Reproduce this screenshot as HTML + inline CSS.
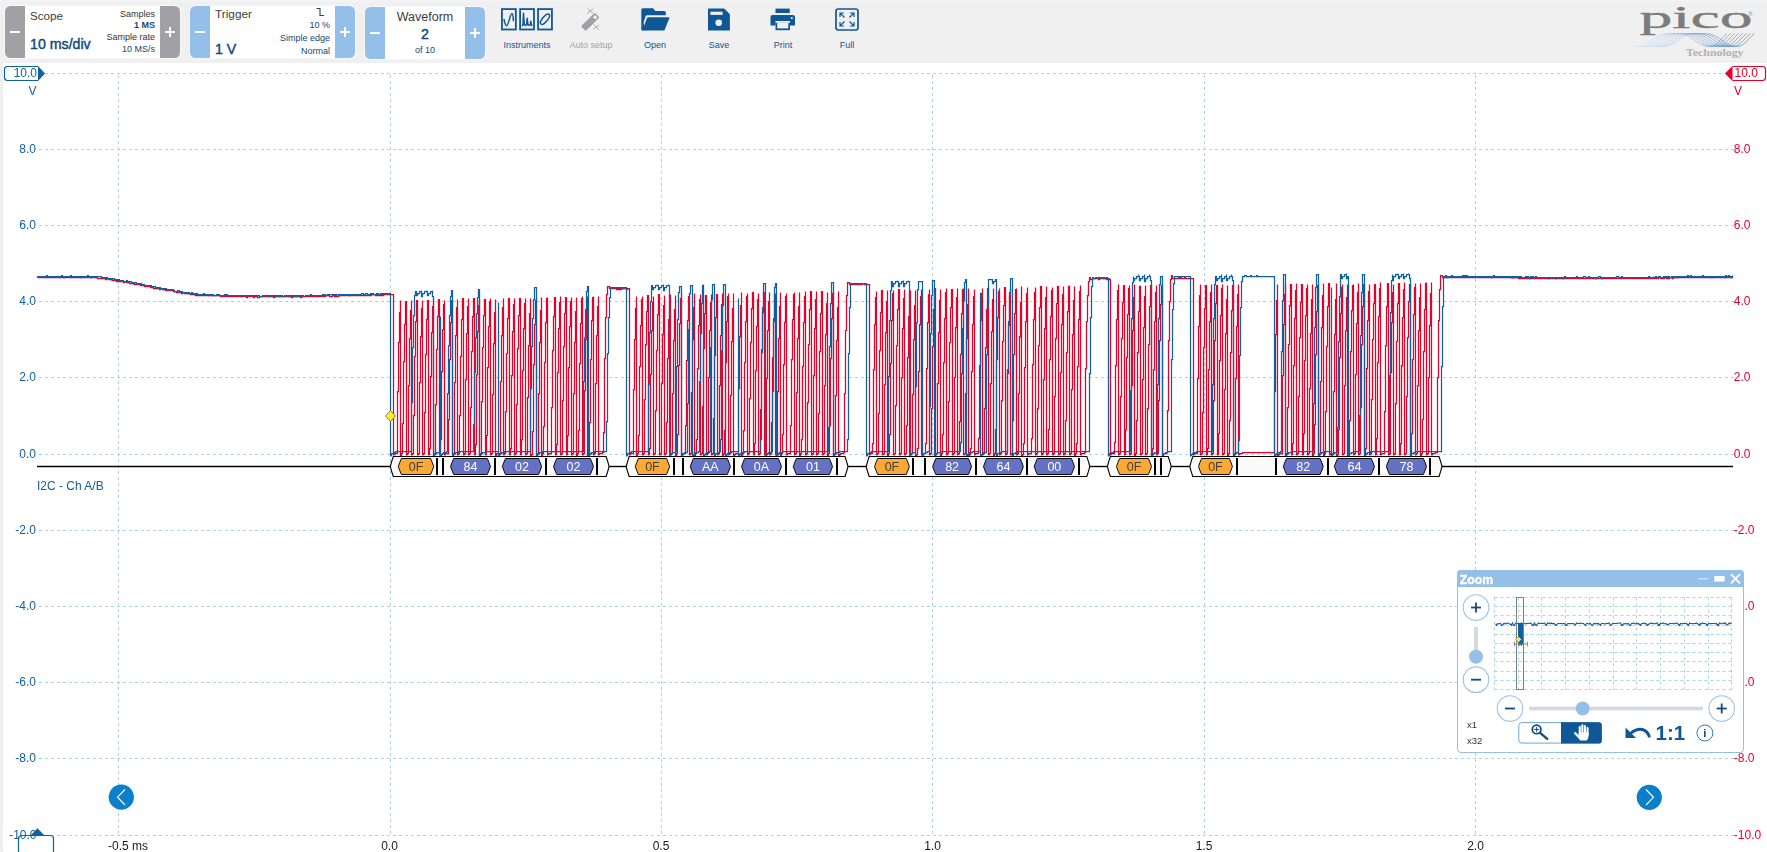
<!DOCTYPE html>
<html><head><meta charset="utf-8"><title>PicoScope</title>
<style>
html,body{margin:0;padding:0;}
body{width:1767px;height:852px;overflow:hidden;background:#f0f0f0;font-family:"Liberation Sans",sans-serif;position:relative;}
#plot{position:absolute;left:3px;top:63px;width:1764px;height:789px;background:#fff;}
#svg{position:absolute;left:0;top:0;will-change:transform;}
#svg text{font-family:"Liberation Sans",sans-serif;}
.abs{position:absolute;}
.ctl{position:absolute;height:52px;background:#fff;border-radius:5.5px;overflow:hidden;box-shadow:0 0 0 1px rgba(255,255,255,0.55);}
.ctl .b{position:absolute;top:0;width:20px;height:52px;}
.ctl .b i{position:absolute;background:#fff;}
.gray .b{background:#a1a1a5;}
.blue .b{background:#94bfe9;}
.t{position:absolute;white-space:nowrap;line-height:1;}
.r{text-align:right;}
.tb{position:absolute;top:0;width:64px;height:63px;text-align:center;font-size:9px;color:#0f5796;}
.tb span{position:absolute;left:0;width:64px;top:40.5px;line-height:1;}
</style></head>
<body>
<div class="abs" style="left:0;top:0;width:1767px;height:2px;background:#f2f3f5"></div>
<div id="plot"></div>
<div class="ctl gray" style="left:5px;top:6px;width:175px;">
  <div class="b" style="left:0"><i style="left:5px;top:25px;width:10px;height:2px"></i></div>
  <div class="b" style="right:0"><i style="left:5px;top:25px;width:10px;height:2px"></i><i style="left:9px;top:21px;width:2px;height:10px"></i></div>
  <div class="t" style="left:25px;top:4px;font-size:11.6px;color:#3c3c3c;">Scope</div>
  <div class="t" style="left:25px;top:31px;font-size:14.2px;color:#124a7c;-webkit-text-stroke:0.45px #124a7c;">10 ms/div</div>
  <div class="t r" style="right:25px;top:3.5px;font-size:9px;color:#333;">Samples</div>
  <div class="t r" style="right:25px;top:15px;font-size:9px;font-weight:bold;color:#124a7c;">1 MS</div>
  <div class="t r" style="right:25px;top:27px;font-size:9px;color:#333;">Sample rate</div>
  <div class="t r" style="right:25px;top:38.5px;font-size:9px;color:#124a7c;">10 MS/s</div>
</div>
<div class="ctl blue" style="left:190px;top:6px;width:165px;">
  <div class="b" style="left:0"><i style="left:5px;top:25px;width:10px;height:2px"></i></div>
  <div class="b" style="right:0"><i style="left:5px;top:25px;width:10px;height:2px"></i><i style="left:9px;top:21px;width:2px;height:10px"></i></div>
  <div class="t" style="left:25px;top:3px;font-size:11.8px;color:#3c3c3c;">Trigger</div>
  <div class="t" style="left:25px;top:35.5px;font-size:14.2px;color:#124a7c;-webkit-text-stroke:0.45px #124a7c;">1 V</div>
  <svg class="abs" style="right:28px;top:1px" width="12" height="11" viewBox="0 0 12 11"><path d="M1.5 1.5H5V8.5H9" fill="none" stroke="#124a7c" stroke-width="1.1"/></svg>
  <div class="t r" style="right:25px;top:15px;font-size:9px;color:#124a7c;">10 %</div>
  <div class="t r" style="right:25px;top:28px;font-size:9px;color:#124a7c;">Simple edge</div>
  <div class="t r" style="right:25px;top:41px;font-size:9px;color:#124a7c;">Normal</div>
</div>
<div class="ctl blue" style="left:365px;top:7px;width:120px;">
  <div class="b" style="left:0"><i style="left:5px;top:25px;width:10px;height:2px"></i></div>
  <div class="b" style="right:0"><i style="left:5px;top:25px;width:10px;height:2px"></i><i style="left:9px;top:21px;width:2px;height:10px"></i></div>
  <div class="t" style="left:20px;width:80px;text-align:center;top:4px;font-size:12.5px;color:#3c3c3c;">Waveform</div>
  <div class="t" style="left:20px;width:80px;text-align:center;top:19.5px;font-size:14.2px;color:#124a7c;-webkit-text-stroke:0.45px #124a7c;">2</div>
  <div class="t" style="left:20px;width:80px;text-align:center;top:38.5px;font-size:9px;color:#124a7c;">of 10</div>
</div>
<div class="tb" style="left:495px"><span>Instruments</span>
 <svg class="abs" style="left:6px;top:8px" width="53" height="24" viewBox="0 0 53 24">
  <g fill="none" stroke="#0f5796" stroke-width="1.8"><rect x="0.95" y="1.1" width="13.9" height="20.4"/><rect x="19.1" y="1.1" width="13.9" height="20.4"/><rect x="37.05" y="1.1" width="13.9" height="20.4"/></g>
  <g fill="none" stroke="#0f5796" stroke-width="1.5" stroke-linecap="round" stroke-linejoin="round"><path d="M3.1 11.6C3.8 15.4 4.6 17.7 5.6 17.7C7.6 17.7 9 5.6 11 5.6C12 5.6 12.2 10 12.4 12.6"/><path d="M21.4 17.6L22 16.4L22.5 5.2L23.3 16.9L24.5 17.4L25.6 16.5L26.2 10.2L26.9 16.8L28.3 17.3L29.3 16.5L29.8 13.2L30.3 16.5L30.8 17.6"/><ellipse cx="44" cy="11.2" rx="6.3" ry="2.5" transform="rotate(-50 44 11.2)"/></g>
 </svg></div>
<div class="tb" style="left:559px;color:#a3a3a3"><span>Auto setup</span>
 <svg class="abs" style="left:20px;top:7px" width="24" height="26" viewBox="0 0 24 26">
  <path d="M15.1 6.6Q15.8 5.9 16.5 6.6L19.8 9.7Q20.5 10.4 19.8 11.1L7.5 23.2Q6.7 23.9 5.9 23.2L2.7 20Q2 19.2 2.7 18.5Z" fill="#a0a1a4"/>
  <path d="M16.1 8L18.4 10.2L16.2 12.4L13.9 10.2Z" fill="#f0f0f0"/>
  <g stroke="#a0a1a4" stroke-width="0.8" fill="none" stroke-linecap="round"><path d="M8.8 1.8L14 6.5M14 1.9L8.4 6.5"/><path d="M15 17.5L19.7 22.8M20 18.4L14.5 21.8"/></g>
 </svg></div>
<div class="tb" style="left:623px"><span>Open</span>
 <svg class="abs" style="left:18px;top:8px" width="29" height="23" viewBox="0 0 29 23">
  <path d="M0.3 21.6V1.7Q0.3 0.2 1.8 0.2H12.1L14.3 2.9H23.3Q24.8 2.9 24.8 4.4V7.2H6.3Q5 7.2 4.5 8.4L0.3 21.6Z" fill="#0f5796"/>
  <path d="M0.3 20V21.3Q0.3 22.6 1.6 22.6H3L3 14Z" fill="#0f5796"/>
  <path d="M2 22.6Q1.2 22.6 1.5 21.8L6 10.2Q6.4 9.3 7.4 9.3H27.7Q28.6 9.3 28.3 10.2L23.4 22.6Z" fill="#0f5796"/>
 </svg></div>
<div class="tb" style="left:687px"><span>Save</span>
 <svg class="abs" style="left:20px;top:8px" width="24" height="23" viewBox="0 0 24 23">
  <path d="M1 1Q1 0.5 1.5 0.5H17.2L22.9 6.2V22Q22.9 22.5 22.4 22.5H1.5Q1 22.5 1 22Z" fill="#0f5796"/>
  <rect x="3.4" y="3.7" width="12.2" height="3.2" fill="#f0f0f0"/>
  <circle cx="11.7" cy="14.7" r="3.3" fill="#f0f0f0"/>
 </svg></div>
<div class="tb" style="left:751px"><span>Print</span>
 <svg class="abs" style="left:19px;top:8px" width="26" height="23" viewBox="0 0 26 23">
  <rect x="5.5" y="0.6" width="14.3" height="4.4" fill="#0f5796"/>
  <path d="M0.5 9Q0.5 7 2.5 7H23Q25 7 25 9V17.5H20V13H5.5V17.5H0.5Z" fill="#0f5796"/>
  <rect x="5.5" y="14.8" width="14.5" height="7.4" fill="#0f5796"/>
  <rect x="7.2" y="14.8" width="11.1" height="5.6" fill="#f0f0f0"/>
  <circle cx="21.8" cy="10" r="1.1" fill="#f0f0f0"/>
 </svg></div>
<div class="tb" style="left:815px"><span>Full</span>
 <svg class="abs" style="left:20px;top:8px" width="24" height="23" viewBox="0 0 24 23">
  <rect x="1" y="1" width="22" height="21" rx="2.2" fill="none" stroke="#0f5796" stroke-width="1.7"/>
  <g fill="none" stroke="#0f5796" stroke-width="1.2"><path d="M5 9V5H9M5 5L9.5 9.5"/><path d="M15 5H19V9M19 5L14.5 9.5"/><path d="M5 14V18H9M5 18L9.5 13.5"/><path d="M19 14V18H15M19 18L14.5 13.5"/></g>
 </svg></div>
<svg class="abs" style="left:1630px;top:0" width="137" height="63" viewBox="0 0 137 63">
  <defs><linearGradient id="lg" gradientUnits="userSpaceOnUse" x1="4" x2="124" y1="0" y2="0"><stop offset="0" stop-color="#d4e5f6"/><stop offset="0.4" stop-color="#9cc0e6"/><stop offset="0.7" stop-color="#4f86be"/><stop offset="1" stop-color="#2a6098"/></linearGradient></defs>
  <g fill="none" stroke="url(#lg)" stroke-width="0.55" id="pl"><path d="M4.5 46.8C19.5 46.8 23.5 33.6 37.5 33.6H48.5C62.5 33.6 66.5 46.6 79.5 46.6C86.5 46.6 90.5 39 97.0 33.4"/><path d="M8.4 46.8C23.4 46.8 27.4 33.6 41.4 33.6H52.4C66.4 33.6 70.4 46.6 83.4 46.6C90.4 46.6 94.4 39 100.9 33.4"/><path d="M12.3 46.8C27.3 46.8 31.3 33.6 45.3 33.6H56.3C70.3 33.6 74.3 46.6 87.3 46.6C94.3 46.6 98.3 39 104.8 33.4"/><path d="M16.2 46.8C31.2 46.8 35.2 33.6 49.2 33.6H60.2C74.2 33.6 78.2 46.6 91.2 46.6C98.2 46.6 102.2 39 108.7 33.4"/><path d="M20.1 46.8C35.1 46.8 39.1 33.6 53.1 33.6H64.1C78.1 33.6 82.1 46.6 95.1 46.6C102.1 46.6 106.1 39 112.6 33.4"/><path d="M24.0 46.8C39.0 46.8 43.0 33.6 57.0 33.6H68.0C82.0 33.6 86.0 46.6 99.0 46.6C106.0 46.6 110.0 39 116.5 33.4"/><path d="M27.9 46.8C42.9 46.8 46.9 33.6 60.9 33.6H71.9C85.9 33.6 89.9 46.6 102.9 46.6C109.9 46.6 113.9 39 120.4 33.4"/><path d="M31.8 46.8C46.8 46.8 50.8 33.6 64.8 33.6H75.8C89.8 33.6 93.8 46.6 106.8 46.6C113.8 46.6 117.8 39 124.3 33.4"/></g>
  <text transform="translate(9.5 28.3) scale(2.12 1)" font-size="31" fill="#7c7c7c" stroke="#7c7c7c" stroke-width="0.35" style="font-family:'Liberation Serif',serif">pico</text>
  <text x="118.5" y="15.5" font-size="5.5" fill="#8a8a8a" style="font-family:'Liberation Sans',sans-serif">®</text>
  <text x="56" y="56.3" font-size="11" font-weight="bold" fill="#b2b2b2" textLength="57.5" lengthAdjust="spacingAndGlyphs" style="font-family:'Liberation Serif',serif">Technology</text>
</svg>

<svg id="svg" width="1767" height="852" viewBox="0 0 1767 852">
<line x1="39" y1="73.5" x2="1734" y2="73.5" stroke="#a6d5e6" stroke-width="1" stroke-dasharray="3 3"/>
<line x1="39" y1="149.5" x2="1734" y2="149.5" stroke="#a6d5e6" stroke-width="1" stroke-dasharray="3 3"/>
<line x1="39" y1="225.5" x2="1734" y2="225.5" stroke="#a6d5e6" stroke-width="1" stroke-dasharray="3 3"/>
<line x1="39" y1="301.5" x2="1734" y2="301.5" stroke="#a6d5e6" stroke-width="1" stroke-dasharray="3 3"/>
<line x1="39" y1="377.5" x2="1734" y2="377.5" stroke="#a6d5e6" stroke-width="1" stroke-dasharray="3 3"/>
<line x1="39" y1="454.5" x2="1734" y2="454.5" stroke="#a6d5e6" stroke-width="1" stroke-dasharray="3 3"/>
<line x1="39" y1="530.5" x2="1734" y2="530.5" stroke="#a6d5e6" stroke-width="1" stroke-dasharray="3 3"/>
<line x1="39" y1="606.5" x2="1734" y2="606.5" stroke="#a6d5e6" stroke-width="1" stroke-dasharray="3 3"/>
<line x1="39" y1="682.5" x2="1734" y2="682.5" stroke="#a6d5e6" stroke-width="1" stroke-dasharray="3 3"/>
<line x1="39" y1="758.5" x2="1734" y2="758.5" stroke="#a6d5e6" stroke-width="1" stroke-dasharray="3 3"/>
<line x1="39" y1="835.5" x2="1734" y2="835.5" stroke="#a6d5e6" stroke-width="1" stroke-dasharray="3 3"/>
<line x1="118.5" y1="75" x2="118.5" y2="835" stroke="#a6d5e6" stroke-width="1" stroke-dasharray="3 3"/>
<line x1="390.5" y1="75" x2="390.5" y2="835" stroke="#a6d5e6" stroke-width="1" stroke-dasharray="3 3"/>
<line x1="661.5" y1="75" x2="661.5" y2="835" stroke="#a6d5e6" stroke-width="1" stroke-dasharray="3 3"/>
<line x1="932.5" y1="75" x2="932.5" y2="835" stroke="#a6d5e6" stroke-width="1" stroke-dasharray="3 3"/>
<line x1="1204.5" y1="75" x2="1204.5" y2="835" stroke="#a6d5e6" stroke-width="1" stroke-dasharray="3 3"/>
<line x1="1475.5" y1="75" x2="1475.5" y2="835" stroke="#a6d5e6" stroke-width="1" stroke-dasharray="3 3"/>
<text x="36" y="153.3" text-anchor="end" font-size="12" fill="#11609f">8.0</text>
<text x="1733.8" y="153.3" text-anchor="start" font-size="12" fill="#e60028">8.0</text>
<text x="36" y="229.3" text-anchor="end" font-size="12" fill="#11609f">6.0</text>
<text x="1733.8" y="229.3" text-anchor="start" font-size="12" fill="#e60028">6.0</text>
<text x="36" y="305.3" text-anchor="end" font-size="12" fill="#11609f">4.0</text>
<text x="1733.8" y="305.3" text-anchor="start" font-size="12" fill="#e60028">4.0</text>
<text x="36" y="381.3" text-anchor="end" font-size="12" fill="#11609f">2.0</text>
<text x="1733.8" y="381.3" text-anchor="start" font-size="12" fill="#e60028">2.0</text>
<text x="36" y="458.3" text-anchor="end" font-size="12" fill="#11609f">0.0</text>
<text x="1733.8" y="458.3" text-anchor="start" font-size="12" fill="#e60028">0.0</text>
<text x="36" y="534.3" text-anchor="end" font-size="12" fill="#11609f">-2.0</text>
<text x="1733.8" y="534.3" text-anchor="start" font-size="12" fill="#e60028">-2.0</text>
<text x="36" y="610.3" text-anchor="end" font-size="12" fill="#11609f">-4.0</text>
<text x="1733.8" y="610.3" text-anchor="start" font-size="12" fill="#e60028">-4.0</text>
<text x="36" y="686.3" text-anchor="end" font-size="12" fill="#11609f">-6.0</text>
<text x="1733.8" y="686.3" text-anchor="start" font-size="12" fill="#e60028">-6.0</text>
<text x="36" y="762.3" text-anchor="end" font-size="12" fill="#11609f">-8.0</text>
<text x="1733.8" y="762.3" text-anchor="start" font-size="12" fill="#e60028">-8.0</text>
<text x="1733.8" y="839" text-anchor="start" font-size="12" fill="#e60028">-10.0</text>
<text x="32.5" y="95" text-anchor="middle" font-size="12" fill="#11609f">V</text>
<text x="1738" y="95" text-anchor="middle" font-size="12" fill="#e60028">V</text>
<path d="M38 66.5H7.5Q4.5 66.5 4.5 69.5V77.5Q4.5 80.5 7.5 80.5H38" fill="#fff" stroke="#11609f" stroke-width="1.2"/>
<path d="M38 66L45 73.5L38 81Z" fill="#11609f"/>
<text x="37" y="77.4" text-anchor="end" font-size="12" fill="#11609f">10.0</text>
<path d="M1732.5 66.5H1762.5Q1765.5 66.5 1765.5 69.5V77.5Q1765.5 80.5 1762.5 80.5H1732.5" fill="#fff" stroke="#e60028" stroke-width="1.2"/>
<path d="M1732.5 66L1725 73.5L1732.5 81Z" fill="#e60028"/>
<text x="1734.5" y="77.4" text-anchor="start" font-size="12" fill="#e60028">10.0</text>
<text x="128" y="849.6" text-anchor="middle" font-size="12" fill="#1a1a1a">-0.5 ms</text>
<text x="389.5" y="849.6" text-anchor="middle" font-size="12" fill="#1a1a1a">0.0</text>
<text x="661" y="849.6" text-anchor="middle" font-size="12" fill="#1a1a1a">0.5</text>
<text x="932.5" y="849.6" text-anchor="middle" font-size="12" fill="#1a1a1a">1.0</text>
<text x="1204" y="849.6" text-anchor="middle" font-size="12" fill="#1a1a1a">1.5</text>
<text x="1475.5" y="849.6" text-anchor="middle" font-size="12" fill="#1a1a1a">2.0</text>
<path d="M18.5 853V838.5Q18.5 835.5 21.5 835.5H50.5Q53.5 835.5 53.5 838.5V853" fill="#fff" stroke="#11609f" stroke-width="1.2"/>
<text x="36.5" y="839" text-anchor="end" font-size="12" fill="#11609f">-10.0</text>
<path d="M30.5 835.5L37.5 828.3L44.5 835.5Z" fill="#11609f"/>
<path d="M37.5 277.5H38.5H39.5H40.5H41.5H42.5H43.5H44.5H45.5H46.5H47.5H48.5H49.5H50.5H51.5H52.5H53.5H54.5H55.5H56.5H57.5H58.5H59.5H60.5H61.5H62.5H63.5H64.5H65.5H66.5H67.5H68.5H69.5H70.5H71.5H72.5H73.5H74.5H75.5H76.5H77.5H78.5H79.5H80.5H81.5H82.5H83.5H84.5H85.5H86.5H87.5H88.5H89.5H90.5H91.5H92.5H93.5H94.5H95.5H96.5H97.5V278.5V277.5V278.5H98.5H99.5H100.5H101.5V277.5V278.5V277.5H102.5V278.5V277.5V278.5H103.5H104.5H105.5V279.5V278.5V279.5H106.5V278.5V279.5V278.5H107.5H108.5V279.5V278.5V279.5H109.5H110.5H111.5V280.5V279.5H112.5V280.5V279.5V280.5H113.5H114.5H115.5H116.5V281.5V280.5V281.5H117.5V280.5V281.5V280.5H118.5V281.5V280.5V281.5H119.5H120.5H121.5H122.5H123.5V282.5V281.5V282.5H124.5V281.5V282.5V281.5H125.5V282.5V281.5H126.5V282.5V281.5V282.5H127.5H128.5H129.5V283.5V282.5V283.5H130.5H131.5H132.5H133.5V284.5V283.5H134.5V284.5V283.5V284.5H135.5H136.5H137.5H138.5H139.5H140.5V285.5V284.5V285.5H141.5H142.5H143.5H144.5V286.5V285.5V286.5H145.5H146.5H147.5H148.5H149.5H150.5V287.5V286.5V287.5H151.5H152.5H153.5V288.5V287.5V288.5H154.5H155.5H156.5H157.5H158.5H159.5V289.5V288.5V289.5H160.5V288.5V289.5V288.5H161.5V289.5V288.5H162.5V289.5V288.5V289.5H163.5H164.5H165.5V290.5V289.5V290.5H166.5V289.5V290.5V289.5H167.5V290.5V289.5V290.5H168.5H169.5H170.5H171.5H172.5H173.5V291.5V290.5V291.5H174.5H175.5H176.5V292.5V291.5V292.5H177.5H178.5H179.5H180.5H181.5V293.5V292.5V293.5H182.5V292.5V293.5V292.5H183.5V293.5V292.5H184.5V293.5V292.5V293.5H185.5H186.5H187.5V294.5V293.5H188.5H189.5V294.5V293.5H190.5V294.5V293.5V294.5H191.5H192.5H193.5H194.5H195.5V295.5V294.5V295.5H196.5V294.5V295.5V294.5H197.5V295.5V294.5V295.5H198.5H199.5H200.5H201.5H202.5H203.5H204.5H205.5H206.5H207.5H208.5V296.5V295.5H209.5H210.5H211.5H212.5H213.5H214.5H215.5H216.5H217.5H218.5H219.5H220.5V296.5V295.5V296.5H221.5H222.5H223.5H224.5H225.5H226.5H227.5H228.5H229.5H230.5H231.5H232.5H233.5H234.5H235.5H236.5H237.5H238.5H239.5H240.5H241.5H242.5H243.5H244.5H245.5H246.5V297.5V296.5V297.5H247.5V296.5V297.5V296.5H248.5H249.5H250.5H251.5H252.5H253.5V297.5V296.5V297.5H254.5V296.5V297.5V296.5H255.5H256.5H257.5V297.5V296.5V297.5H258.5H259.5V296.5V297.5V296.5H260.5H261.5H262.5H263.5H264.5H265.5H266.5H267.5H268.5H269.5H270.5H271.5H272.5H273.5V297.5V296.5V297.5H274.5V296.5V297.5V296.5H275.5H276.5H277.5H278.5H279.5H280.5H281.5H282.5H283.5H284.5H285.5H286.5H287.5H288.5H289.5H290.5H291.5V297.5V296.5V297.5H292.5V296.5V297.5V296.5H293.5H294.5H295.5H296.5H297.5H298.5H299.5H300.5V297.5V296.5V297.5H301.5V296.5V297.5V296.5H302.5H303.5H304.5H305.5H306.5H307.5H308.5H309.5H310.5H311.5H312.5H313.5H314.5H315.5H316.5H317.5H318.5H319.5V295.5V296.5H320.5V295.5V296.5V295.5H321.5V296.5V295.5V296.5H322.5H323.5H324.5H325.5V295.5V296.5V295.5H326.5H327.5H328.5H329.5V296.5V295.5V296.5H330.5H331.5H332.5V295.5V296.5V295.5H333.5H334.5V296.5V295.5V296.5H335.5V295.5V296.5V295.5H336.5V296.5V295.5V296.5H337.5H338.5V295.5V296.5V295.5H339.5H340.5H341.5H342.5H343.5H344.5H345.5H346.5H347.5H348.5H349.5H350.5H351.5H352.5H353.5H354.5H355.5H356.5H357.5H358.5H359.5H360.5H361.5H362.5H363.5V294.5V295.5V294.5H364.5V295.5V294.5V295.5H365.5H366.5H367.5H368.5H369.5H370.5H371.5V294.5V295.5V294.5H372.5H373.5H374.5H375.5V295.5V294.5V295.5H376.5V294.5V295.5V294.5H377.5V295.5V294.5V295.5H378.5H379.5V294.5V295.5V294.5H380.5V295.5V294.5V295.5H381.5V294.5V295.5V294.5H382.5V295.5V294.5V295.5H383.5V294.5V295.5V294.5H384.5H385.5H386.5H387.5H388.5H389.5H390.5H391.5H392.5H393.5V455.5V294.5V454.5H394.5V453.5V454.5V453.5H395.5H396.5H397.5V391.5V453.5V391.5H398.5V342.5V391.5V342.5H399.5V312.5V342.5V312.5H400.5V455.5V300.5V455.5H401.5V453.5V455.5V453.5H402.5V423.5V453.5V423.5H403.5V361.5V423.5V361.5H404.5V324.5V361.5V324.5H405.5V301.5V324.5V301.5H406.5V455.5V301.5V454.5H407.5V453.5V454.5V453.5H408.5V385.5V453.5V385.5H409.5V338.5V385.5V338.5H410.5V310.5V338.5V310.5H411.5V455.5V300.5V454.5H412.5V453.5V454.5V453.5H413.5V415.5V453.5V415.5H414.5V356.5V415.5V356.5H415.5V321.5V356.5V321.5H416.5V300.5V321.5V300.5H417.5V455.5V300.5V454.5H418.5V453.5V454.5V453.5H419.5V382.5V453.5V382.5H420.5V336.5V382.5V336.5H421.5V308.5V336.5V308.5H422.5V455.5V300.5V454.5H423.5V453.5V454.5V453.5H424.5V412.5V453.5V412.5H425.5V354.5V412.5V354.5H426.5V319.5V354.5V319.5H427.5V300.5V319.5V300.5H428.5V455.5V300.5V454.5H429.5V448.5V454.5V448.5H430.5V376.5V448.5V376.5H431.5V332.5V376.5V332.5H432.5V306.5V332.5V306.5H433.5V455.5V299.5V454.5H434.5V453.5V454.5V453.5H435.5V404.5V453.5V404.5H436.5V349.5V404.5V349.5H437.5V316.5V349.5V316.5H438.5V299.5V316.5V299.5H439.5V455.5V299.5V454.5H440.5V439.5V454.5V439.5H441.5V371.5V439.5V371.5H442.5V329.5V371.5V329.5H443.5V304.5V329.5V304.5H444.5V455.5V300.5V454.5H445.5V453.5V454.5V453.5H446.5H447.5H448.5V419.5V453.5V419.5H449.5V359.5V419.5V359.5H450.5V322.5V359.5V322.5H451.5V300.5V322.5V300.5H452.5V455.5V300.5V454.5H453.5V453.5V454.5V453.5H454.5V382.5V453.5V382.5H455.5V335.5V382.5V335.5H456.5V307.5V335.5V307.5H457.5V455.5V299.5V454.5H458.5V453.5V454.5V453.5H459.5V415.5V453.5V415.5H460.5V356.5V415.5V356.5H461.5V319.5V356.5V319.5H462.5V298.5V319.5V298.5H463.5V455.5V298.5V454.5H464.5V453.5V454.5V453.5H465.5V379.5V453.5V379.5H466.5V333.5V379.5V333.5H467.5V306.5V333.5V306.5H468.5V455.5V298.5V454.5H469.5V453.5V454.5V453.5H470.5V407.5V453.5V407.5H471.5V351.5V407.5V351.5H472.5V316.5V351.5V316.5H473.5V298.5V316.5V298.5H474.5V455.5V298.5V454.5H475.5V444.5V454.5V444.5H476.5V374.5V444.5V374.5H477.5V331.5V374.5V331.5H478.5V305.5V331.5V305.5H479.5V455.5V299.5V454.5H480.5V453.5V454.5V453.5H481.5V401.5V453.5V401.5H482.5V347.5V401.5V347.5H483.5V315.5V347.5V315.5H484.5V299.5V315.5V299.5H485.5V455.5V299.5V454.5H486.5V435.5V454.5V435.5H487.5V367.5V435.5V367.5H488.5V326.5V367.5V326.5H489.5V301.5V326.5V301.5H490.5V455.5V298.5V454.5H491.5V453.5V454.5V453.5H492.5V394.5V453.5V394.5H493.5V343.5V394.5V343.5H494.5V312.5V343.5V312.5H495.5V455.5V299.5V455.5H496.5V453.5V455.5V453.5H497.5H498.5H499.5H500.5V381.5V453.5V381.5H501.5V335.5V381.5V335.5H502.5V307.5V335.5V307.5H503.5V455.5V298.5V454.5H504.5V453.5V454.5V453.5H505.5V411.5V453.5V411.5H506.5V353.5V411.5V353.5H507.5V318.5V353.5V318.5H508.5V298.5V318.5V298.5H509.5V455.5V298.5V454.5H510.5V448.5V454.5V448.5H511.5V375.5V448.5V375.5H512.5V331.5V375.5V331.5H513.5V304.5V331.5V304.5H514.5V455.5V298.5V454.5H515.5V453.5V454.5V453.5H516.5V404.5V453.5V404.5H517.5V348.5V404.5V348.5H518.5V315.5V348.5V315.5H519.5V298.5V315.5V298.5H520.5V455.5V298.5V454.5H521.5V439.5V454.5V439.5H522.5V370.5V439.5V370.5H523.5V328.5V370.5V328.5H524.5V303.5V328.5V303.5H525.5V455.5V298.5V454.5H526.5V453.5V454.5V453.5H527.5V397.5V453.5V397.5H528.5V345.5V397.5V345.5H529.5V313.5V345.5V313.5H530.5V455.5V298.5V455.5H531.5V454.5V455.5V454.5H532.5V431.5V454.5V431.5H533.5V364.5V431.5V364.5H534.5V324.5V364.5V324.5H535.5V300.5V324.5V300.5H536.5V455.5V297.5V454.5H537.5V453.5V454.5V453.5H538.5V393.5V453.5V393.5H539.5V342.5V393.5V342.5H540.5V310.5V342.5V310.5H541.5V455.5V297.5V455.5H542.5V453.5V455.5V453.5H543.5V426.5V453.5V426.5H544.5V362.5V426.5V362.5H545.5V322.5V362.5V322.5H546.5V298.5V322.5V298.5H547.5V455.5V297.5V454.5H548.5V453.5V454.5V453.5H549.5H550.5H551.5V407.5V453.5V407.5H552.5V350.5V407.5V350.5H553.5V316.5V350.5V316.5H554.5V297.5V316.5V297.5H555.5V455.5V297.5V454.5H556.5V444.5V454.5V444.5H557.5V372.5V444.5V372.5H558.5V328.5V372.5V328.5H559.5V302.5V328.5V302.5H560.5V455.5V296.5V454.5H561.5V453.5V454.5V453.5H562.5V400.5V453.5V400.5H563.5V346.5V400.5V346.5H564.5V313.5V346.5V313.5H565.5V297.5V313.5V297.5H566.5V455.5V297.5V454.5H567.5V435.5V454.5V435.5H568.5V367.5V435.5V367.5H569.5V326.5V367.5V326.5H570.5V301.5V326.5V301.5H571.5V455.5V297.5V454.5H572.5V453.5V454.5V453.5H573.5V393.5V453.5V393.5H574.5V342.5V393.5V342.5H575.5V311.5V342.5V311.5H576.5V455.5V297.5V455.5H577.5V453.5V455.5V453.5H578.5V430.5V453.5V430.5H579.5V363.5V430.5V363.5H580.5V323.5V363.5V323.5H581.5V298.5V323.5V298.5H582.5V455.5V296.5V454.5H583.5V453.5V454.5V453.5H584.5V390.5V453.5V390.5H585.5V339.5V390.5V339.5H586.5V308.5V339.5V308.5H587.5V455.5V296.5V455.5H588.5V453.5V455.5V453.5H589.5V422.5V453.5V422.5H590.5V359.5V422.5V359.5H591.5V320.5V359.5V320.5H592.5V297.5V320.5V297.5H593.5V455.5V296.5V454.5H594.5V453.5V454.5V453.5H595.5V383.5V453.5V383.5H596.5V335.5V383.5V335.5H597.5V306.5V335.5V306.5H598.5V455.5V296.5V454.5H599.5V453.5V454.5V453.5H600.5H601.5H602.5V452.5V453.5V452.5H603.5V432.5V452.5V432.5H604.5V358.5V432.5V358.5H605.5V317.5V358.5V317.5H606.5V294.5V317.5V294.5H607.5V286.5V294.5V286.5H608.5H609.5V288.5V286.5V288.5H610.5H611.5H612.5H613.5H614.5H615.5H616.5V289.5V288.5V289.5H617.5V288.5V289.5V288.5H618.5V289.5V288.5V289.5H619.5V288.5V289.5V288.5H620.5V289.5V288.5V289.5H621.5V288.5V289.5V288.5H622.5H623.5H624.5H625.5H626.5V289.5V288.5V289.5H627.5V288.5V289.5V288.5H628.5H629.5V455.5V288.5V454.5H630.5V453.5V454.5V453.5H631.5H632.5H633.5V389.5V453.5V389.5H634.5V339.5V389.5V339.5H635.5V308.5V339.5V308.5H636.5V455.5V296.5V455.5H637.5V453.5V455.5V453.5H638.5V435.5V453.5V435.5H639.5V366.5V435.5V366.5H640.5V325.5V366.5V325.5H641.5V299.5V325.5V299.5H642.5V455.5V296.5V454.5H643.5V453.5V454.5V453.5H644.5V399.5V453.5V399.5H645.5V344.5V399.5V344.5H646.5V311.5V344.5V311.5H647.5V295.5V311.5V295.5H648.5V455.5V295.5V454.5H649.5V448.5V454.5V448.5H650.5V374.5V448.5V374.5H651.5V330.5V374.5V330.5H652.5V302.5V330.5V302.5H653.5V455.5V296.5V454.5H654.5V453.5V454.5V453.5H655.5V410.5V453.5V410.5H656.5V350.5V410.5V350.5H657.5V314.5V350.5V314.5H658.5V294.5V314.5V294.5H659.5V455.5V294.5V454.5H660.5V453.5V454.5V453.5H661.5V383.5V453.5V383.5H662.5V334.5V383.5V334.5H663.5V305.5V334.5V305.5H664.5V455.5V295.5V454.5H665.5V453.5V454.5V453.5H666.5V422.5V453.5V422.5H667.5V358.5V422.5V358.5H668.5V319.5V358.5V319.5H669.5V295.5V319.5V295.5H670.5V455.5V294.5V454.5H671.5V453.5V454.5V453.5H672.5V393.5V453.5V393.5H673.5V340.5V393.5V340.5H674.5V309.5V340.5V309.5H675.5V455.5V295.5V455.5H676.5V453.5V455.5V453.5H677.5V434.5V453.5V434.5H678.5V365.5V434.5V365.5H679.5V323.5V365.5V323.5H680.5V298.5V323.5V298.5H681.5V455.5V294.5V454.5H682.5V453.5V454.5V453.5H683.5H684.5H685.5V425.5V453.5V425.5H686.5V360.5V425.5V360.5H687.5V320.5V360.5V320.5H688.5V296.5V320.5V296.5H689.5V455.5V294.5V454.5H690.5V453.5V454.5V453.5H691.5V392.5V453.5V392.5H692.5V339.5V392.5V339.5H693.5V307.5V339.5V307.5H694.5V455.5V293.5V455.5H695.5V453.5V455.5V453.5H696.5V439.5V453.5V439.5H697.5V368.5V439.5V368.5H698.5V325.5V368.5V325.5H699.5V299.5V325.5V299.5H700.5V455.5V294.5V454.5H701.5V453.5V454.5V453.5H702.5V406.5V453.5V406.5H703.5V348.5V406.5V348.5H704.5V313.5V348.5V313.5H705.5V295.5V313.5V295.5H706.5V455.5V295.5V454.5H707.5V453.5V454.5V453.5H708.5V377.5V453.5V377.5H709.5V330.5V377.5V330.5H710.5V302.5V330.5V302.5H711.5V455.5V294.5V454.5H712.5V453.5V454.5V453.5H713.5V418.5V453.5V418.5H714.5V355.5V418.5V355.5H715.5V317.5V355.5V317.5H716.5V294.5V317.5V294.5H717.5V455.5V294.5V454.5H718.5V453.5V454.5V453.5H719.5V385.5V453.5V385.5H720.5V335.5V385.5V335.5H721.5V304.5V335.5V304.5H722.5V455.5V293.5V455.5H723.5V453.5V455.5V453.5H724.5V430.5V453.5V430.5H725.5V362.5V430.5V362.5H726.5V321.5V362.5V321.5H727.5V296.5V321.5V296.5H728.5V455.5V293.5V454.5H729.5V453.5V454.5V453.5H730.5V395.5V453.5V395.5H731.5V341.5V395.5V341.5H732.5V308.5V341.5V308.5H733.5V455.5V293.5V455.5H734.5V454.5V455.5V454.5H735.5V453.5V454.5V453.5H736.5H737.5H738.5V388.5V453.5V388.5H739.5V336.5V388.5V336.5H740.5V305.5V336.5V305.5H741.5V455.5V292.5V455.5H742.5V453.5V455.5V453.5H743.5V430.5V453.5V430.5H744.5V362.5V430.5V362.5H745.5V321.5V362.5V321.5H746.5V296.5V321.5V296.5H747.5V455.5V293.5V454.5H748.5V453.5V454.5V453.5H749.5V398.5V453.5V398.5H750.5V342.5V398.5V342.5H751.5V308.5V342.5V308.5H752.5V292.5V308.5V292.5H753.5V455.5V292.5V454.5H754.5V443.5V454.5V443.5H755.5V370.5V443.5V370.5H756.5V326.5V370.5V326.5H757.5V299.5V326.5V299.5H758.5V455.5V293.5V454.5H759.5V453.5V454.5V453.5H760.5V409.5V453.5V409.5H761.5V349.5V409.5V349.5H762.5V312.5V349.5V312.5H763.5V292.5V312.5V292.5H764.5V455.5V292.5V454.5H765.5V453.5V454.5V453.5H766.5V378.5V453.5V378.5H767.5V330.5V378.5V330.5H768.5V301.5V330.5V301.5H769.5V455.5V292.5V454.5H770.5V453.5V454.5V453.5H771.5V422.5V453.5V422.5H772.5V357.5V422.5V357.5H773.5V318.5V357.5V318.5H774.5V294.5V318.5V294.5H775.5V455.5V293.5V454.5H776.5V453.5V454.5V453.5H777.5V391.5V453.5V391.5H778.5V338.5V391.5V338.5H779.5V306.5V338.5V306.5H780.5V455.5V292.5V455.5H781.5V453.5V455.5V453.5H782.5V434.5V453.5V434.5H783.5V364.5V434.5V364.5H784.5V322.5V364.5V322.5H785.5V296.5V322.5V296.5H786.5V455.5V293.5V454.5H787.5V453.5V454.5V453.5H788.5H789.5H790.5V425.5V453.5V425.5H791.5V359.5V425.5V359.5H792.5V319.5V359.5V319.5H793.5V294.5V319.5V294.5H794.5V455.5V292.5V454.5H795.5V453.5V454.5V453.5H796.5V392.5V453.5V392.5H797.5V338.5V392.5V338.5H798.5V306.5V338.5V306.5H799.5V455.5V292.5V455.5H800.5V453.5V455.5V453.5H801.5V439.5V453.5V439.5H802.5V366.5V439.5V366.5H803.5V322.5V366.5V322.5H804.5V296.5V322.5V296.5H805.5V455.5V291.5V454.5H806.5V453.5V454.5V453.5H807.5V402.5V453.5V402.5H808.5V344.5V402.5V344.5H809.5V309.5V344.5V309.5H810.5V291.5V309.5V291.5H811.5V455.5V291.5V454.5H812.5V453.5V454.5V453.5H813.5V375.5V453.5V375.5H814.5V328.5V375.5V328.5H815.5V299.5V328.5V299.5H816.5V455.5V291.5V454.5H817.5V453.5V454.5V453.5H818.5V413.5V453.5V413.5H819.5V351.5V413.5V351.5H820.5V313.5V351.5V313.5H821.5V291.5V313.5V291.5H822.5V455.5V291.5V454.5H823.5V453.5V454.5V453.5H824.5V385.5V453.5V385.5H825.5V334.5V385.5V334.5H826.5V303.5V334.5V303.5H827.5V455.5V292.5V455.5H828.5V453.5V455.5V453.5H829.5V425.5V453.5V425.5H830.5V358.5V425.5V358.5H831.5V318.5V358.5V318.5H832.5V293.5V318.5V293.5H833.5V455.5V291.5V454.5H834.5V453.5V454.5V453.5H835.5V395.5V453.5V395.5H836.5V340.5V395.5V340.5H837.5V307.5V340.5V307.5H838.5V455.5V291.5V455.5H839.5V454.5V455.5V454.5H840.5V453.5V454.5V453.5H841.5H842.5H843.5V452.5V453.5V452.5H844.5V393.5V452.5V393.5H845.5V330.5V393.5V330.5H846.5V295.5V330.5V295.5H847.5V282.5V295.5V282.5H848.5H849.5V284.5V282.5V284.5H850.5H851.5H852.5H853.5H854.5V283.5V284.5V283.5H855.5V284.5V283.5V284.5H856.5H857.5V283.5V284.5V283.5H858.5V284.5V283.5V284.5H859.5H860.5H861.5H862.5V283.5V284.5V283.5H863.5H864.5V284.5V283.5V284.5H865.5H866.5H867.5H868.5H869.5V455.5V284.5V454.5H870.5V453.5V454.5V453.5H871.5H872.5V443.5V453.5V443.5H873.5V369.5V443.5V369.5H874.5V324.5V369.5V324.5H875.5V297.5V324.5V297.5H876.5V455.5V291.5V454.5H877.5V453.5V454.5V453.5H878.5V413.5V453.5V413.5H879.5V350.5V413.5V350.5H880.5V312.5V350.5V312.5H881.5V290.5V312.5V290.5H882.5V455.5V290.5V454.5H883.5V453.5V454.5V453.5H884.5V384.5V453.5V384.5H885.5V332.5V384.5V332.5H886.5V301.5V332.5V301.5H887.5V455.5V290.5V455.5H888.5V453.5V455.5V453.5H889.5V434.5V453.5V434.5H890.5V363.5V434.5V363.5H891.5V320.5V363.5V320.5H892.5V293.5V320.5V293.5H893.5V455.5V290.5V454.5H894.5V453.5V454.5V453.5H895.5V405.5V453.5V405.5H896.5V345.5V405.5V345.5H897.5V309.5V345.5V309.5H898.5V289.5V309.5V289.5H899.5V455.5V289.5V454.5H900.5V453.5V454.5V453.5H901.5V377.5V453.5V377.5H902.5V328.5V377.5V328.5H903.5V298.5V328.5V298.5H904.5V455.5V289.5V454.5H905.5V453.5V454.5V453.5H906.5V425.5V453.5V425.5H907.5V357.5V425.5V357.5H908.5V316.5V357.5V316.5H909.5V292.5V316.5V292.5H910.5V455.5V290.5V454.5H911.5V453.5V454.5V453.5H912.5V394.5V453.5V394.5H913.5V339.5V394.5V339.5H914.5V305.5V339.5V305.5H915.5V455.5V290.5V455.5H916.5V454.5V455.5V454.5H917.5V448.5V454.5V448.5H918.5V371.5V448.5V371.5H919.5V324.5V371.5V324.5H920.5V296.5V324.5V296.5H921.5V455.5V289.5V454.5H922.5V453.5V454.5V453.5H923.5H924.5H925.5V443.5V453.5V443.5H926.5V368.5V443.5V368.5H927.5V322.5V368.5V322.5H928.5V294.5V322.5V294.5H929.5V455.5V289.5V454.5H930.5V453.5V454.5V453.5H931.5V408.5V453.5V408.5H932.5V346.5V408.5V346.5H933.5V309.5V346.5V309.5H934.5V288.5V309.5V288.5H935.5V455.5V288.5V454.5H936.5V453.5V454.5V453.5H937.5V383.5V453.5V383.5H938.5V332.5V383.5V332.5H939.5V300.5V332.5V300.5H940.5V455.5V289.5V455.5H941.5V453.5V455.5V453.5H942.5V434.5V453.5V434.5H943.5V362.5V434.5V362.5H944.5V318.5V362.5V318.5H945.5V292.5V318.5V292.5H946.5V455.5V288.5V454.5H947.5V453.5V454.5V453.5H948.5V401.5V453.5V401.5H949.5V342.5V401.5V342.5H950.5V307.5V342.5V307.5H951.5V289.5V307.5V289.5H952.5V455.5V289.5V454.5H953.5V453.5V454.5V453.5H954.5V377.5V453.5V377.5H955.5V327.5V377.5V327.5H956.5V297.5V327.5V297.5H957.5V455.5V288.5V454.5H958.5V453.5V454.5V453.5H959.5V421.5V453.5V421.5H960.5V354.5V421.5V354.5H961.5V313.5V354.5V313.5H962.5V289.5V313.5V289.5H963.5V455.5V288.5V454.5H964.5V453.5V454.5V453.5H965.5V393.5V453.5V393.5H966.5V338.5V393.5V338.5H967.5V304.5V338.5V304.5H968.5V455.5V288.5V455.5H969.5V454.5V455.5V454.5H970.5V448.5V454.5V448.5H971.5V371.5V448.5V371.5H972.5V324.5V371.5V324.5H973.5V296.5V324.5V296.5H974.5V455.5V289.5V454.5H975.5V453.5V454.5V453.5H976.5H977.5H978.5V438.5V453.5V438.5H979.5V365.5V438.5V365.5H980.5V320.5V365.5V320.5H981.5V293.5V320.5V293.5H982.5V455.5V288.5V454.5H983.5V453.5V454.5V453.5H984.5V408.5V453.5V408.5H985.5V347.5V408.5V347.5H986.5V309.5V347.5V309.5H987.5V288.5V309.5V288.5H988.5V455.5V288.5V454.5H989.5V453.5V454.5V453.5H990.5V383.5V453.5V383.5H991.5V331.5V383.5V331.5H992.5V299.5V331.5V299.5H993.5V455.5V288.5V455.5H994.5V453.5V455.5V453.5H995.5V429.5V453.5V429.5H996.5V359.5V429.5V359.5H997.5V317.5V359.5V317.5H998.5V291.5V317.5V291.5H999.5V455.5V288.5V454.5H1000.5V453.5V454.5V453.5H1001.5V400.5V453.5V400.5H1002.5V341.5V400.5V341.5H1003.5V305.5V341.5V305.5H1004.5V287.5V305.5V287.5H1005.5V455.5V287.5V454.5H1006.5V453.5V454.5V453.5H1007.5V373.5V453.5V373.5H1008.5V325.5V373.5V325.5H1009.5V296.5V325.5V296.5H1010.5V455.5V288.5V454.5H1011.5V453.5V454.5V453.5H1012.5V420.5V453.5V420.5H1013.5V354.5V420.5V354.5H1014.5V313.5V354.5V313.5H1015.5V289.5V313.5V289.5H1016.5V455.5V288.5V454.5H1017.5V453.5V454.5V453.5H1018.5V393.5V453.5V393.5H1019.5V336.5V393.5V336.5H1020.5V302.5V336.5V302.5H1021.5V455.5V286.5V455.5H1022.5V454.5V455.5V454.5H1023.5V443.5V454.5V443.5H1024.5V367.5V443.5V367.5H1025.5V321.5V367.5V321.5H1026.5V293.5V321.5V293.5H1027.5V455.5V287.5V454.5H1028.5V453.5V454.5V453.5H1029.5H1030.5H1031.5V438.5V453.5V438.5H1032.5V364.5V438.5V364.5H1033.5V319.5V364.5V319.5H1034.5V292.5V319.5V292.5H1035.5V455.5V287.5V454.5H1036.5V453.5V454.5V453.5H1037.5V408.5V453.5V408.5H1038.5V345.5V408.5V345.5H1039.5V307.5V345.5V307.5H1040.5V286.5V307.5V286.5H1041.5V455.5V286.5V454.5H1042.5V453.5V454.5V453.5H1043.5V379.5V453.5V379.5H1044.5V328.5V379.5V328.5H1045.5V297.5V328.5V297.5H1046.5V455.5V286.5V454.5H1047.5V453.5V454.5V453.5H1048.5V429.5V453.5V429.5H1049.5V359.5V429.5V359.5H1050.5V316.5V359.5V316.5H1051.5V290.5V316.5V290.5H1052.5V455.5V287.5V454.5H1053.5V453.5V454.5V453.5H1054.5V396.5V453.5V396.5H1055.5V338.5V396.5V338.5H1056.5V303.5V338.5V303.5H1057.5V286.5V303.5V286.5H1058.5V455.5V286.5V454.5H1059.5V453.5V454.5V453.5H1060.5V372.5V453.5V372.5H1061.5V324.5V372.5V324.5H1062.5V294.5V324.5V294.5H1063.5V455.5V286.5V454.5H1064.5V453.5V454.5V453.5H1065.5V420.5V453.5V420.5H1066.5V352.5V420.5V352.5H1067.5V311.5V352.5V311.5H1068.5V286.5V311.5V286.5H1069.5V455.5V285.5V454.5H1070.5V453.5V454.5V453.5H1071.5V389.5V453.5V389.5H1072.5V334.5V389.5V334.5H1073.5V300.5V334.5V300.5H1074.5V455.5V286.5V455.5H1075.5V453.5V455.5V453.5H1076.5V443.5V453.5V443.5H1077.5V366.5V443.5V366.5H1078.5V319.5V366.5V319.5H1079.5V291.5V319.5V291.5H1080.5V455.5V285.5V454.5H1081.5V453.5V454.5V453.5H1082.5H1083.5H1084.5V452.5V453.5V452.5H1085.5V368.5V452.5V368.5H1086.5V321.5V368.5V321.5H1087.5V295.5V321.5V295.5H1088.5V281.5V295.5V281.5H1089.5V277.5V281.5V277.5H1090.5V279.5V277.5V279.5H1091.5H1092.5V278.5V279.5V278.5H1093.5H1094.5H1095.5H1096.5H1097.5H1098.5V279.5V278.5V279.5H1099.5V278.5V279.5V278.5H1100.5H1101.5H1102.5H1103.5H1104.5H1105.5H1106.5V279.5V278.5V279.5H1107.5V278.5V279.5V278.5H1108.5H1109.5V279.5V278.5V279.5H1110.5V455.5V279.5V454.5H1111.5V453.5V454.5V453.5H1112.5H1113.5H1114.5V442.5V453.5V442.5H1115.5V365.5V442.5V365.5H1116.5V319.5V365.5V319.5H1117.5V290.5V319.5V290.5H1118.5V455.5V284.5V454.5H1119.5V453.5V454.5V453.5H1120.5V396.5V453.5V396.5H1121.5V338.5V396.5V338.5H1122.5V302.5V338.5V302.5H1123.5V285.5V302.5V285.5H1124.5V455.5V285.5V454.5H1125.5V429.5V454.5V429.5H1126.5V357.5V429.5V357.5H1127.5V314.5V357.5V314.5H1128.5V288.5V314.5V288.5H1129.5V455.5V285.5V454.5H1130.5V453.5V454.5V453.5H1131.5V385.5V453.5V385.5H1132.5V330.5V385.5V330.5H1133.5V297.5V330.5V297.5H1134.5V455.5V284.5V455.5H1135.5V453.5V455.5V453.5H1136.5V420.5V453.5V420.5H1137.5V352.5V420.5V352.5H1138.5V311.5V352.5V311.5H1139.5V286.5V311.5V286.5H1140.5V455.5V285.5V454.5H1141.5V453.5V454.5V453.5H1142.5V379.5V453.5V379.5H1143.5V327.5V379.5V327.5H1144.5V296.5V327.5V296.5H1145.5V455.5V285.5V454.5H1146.5V453.5V454.5V453.5H1147.5V408.5V453.5V408.5H1148.5V344.5V408.5V344.5H1149.5V306.5V344.5V306.5H1150.5V285.5V306.5V285.5H1151.5V455.5V285.5V454.5H1152.5V448.5V454.5V448.5H1153.5V369.5V448.5V369.5H1154.5V321.5V369.5V321.5H1155.5V292.5V321.5V292.5H1156.5V455.5V285.5V454.5H1157.5V453.5V454.5V453.5H1158.5V400.5V453.5V400.5H1159.5V340.5V400.5V340.5H1160.5V304.5V340.5V304.5H1161.5V285.5V304.5V285.5H1162.5V455.5V285.5V454.5H1163.5V453.5V454.5V453.5H1164.5H1165.5H1166.5V452.5V453.5V452.5H1167.5V410.5V452.5V410.5H1168.5V340.5V410.5V340.5H1169.5V301.5V340.5V301.5H1170.5V279.5V301.5V279.5H1171.5V275.5V279.5V275.5H1172.5V278.5V275.5V278.5H1173.5H1174.5H1175.5H1176.5H1177.5H1178.5H1179.5H1180.5H1181.5H1182.5H1183.5H1184.5H1185.5H1186.5H1187.5H1188.5H1189.5H1190.5H1191.5H1192.5H1193.5V455.5V278.5V454.5H1194.5V453.5V454.5V453.5H1195.5H1196.5H1197.5V378.5V453.5V378.5H1198.5V326.5V378.5V326.5H1199.5V295.5V326.5V295.5H1200.5V455.5V284.5V454.5H1201.5V453.5V454.5V453.5H1202.5V412.5V453.5V412.5H1203.5V347.5V412.5V347.5H1204.5V308.5V347.5V308.5H1205.5V285.5V308.5V285.5H1206.5V455.5V285.5V454.5H1207.5V448.5V454.5V448.5H1208.5V369.5V448.5V369.5H1209.5V321.5V369.5V321.5H1210.5V292.5V321.5V292.5H1211.5V455.5V284.5V454.5H1212.5V453.5V454.5V453.5H1213.5V400.5V453.5V400.5H1214.5V340.5V400.5V340.5H1215.5V303.5V340.5V303.5H1216.5V285.5V303.5V285.5H1217.5V455.5V285.5V454.5H1218.5V433.5V454.5V433.5H1219.5V360.5V433.5V360.5H1220.5V315.5V360.5V315.5H1221.5V288.5V315.5V288.5H1222.5V455.5V284.5V454.5H1223.5V453.5V454.5V453.5H1224.5V389.5V453.5V389.5H1225.5V333.5V389.5V333.5H1226.5V299.5V333.5V299.5H1227.5V455.5V285.5V455.5H1228.5V453.5V455.5V453.5H1229.5V420.5V453.5V420.5H1230.5V352.5V420.5V352.5H1231.5V310.5V352.5V310.5H1232.5V285.5V310.5V285.5H1233.5V455.5V284.5V454.5H1234.5V453.5V454.5V453.5H1235.5V378.5V453.5V378.5H1236.5V326.5V378.5V326.5H1237.5V294.5V326.5V294.5H1238.5V455.5V284.5V454.5H1239.5V453.5V454.5V453.5H1240.5H1241.5H1242.5V452.5V453.5V452.5H1243.5H1244.5H1245.5H1246.5H1247.5H1248.5H1249.5H1250.5H1251.5H1252.5H1253.5H1254.5H1255.5H1256.5H1257.5H1258.5H1259.5H1260.5H1261.5H1262.5H1263.5H1264.5H1265.5H1266.5H1267.5H1268.5H1269.5H1270.5H1271.5H1272.5H1273.5H1274.5V391.5V452.5V391.5H1275.5V334.5V391.5V334.5H1276.5V300.5V334.5V300.5H1277.5V455.5V284.5V455.5H1278.5V454.5V455.5V454.5H1279.5V453.5V454.5V453.5H1280.5H1281.5H1282.5V375.5V453.5V375.5H1283.5V324.5V375.5V324.5H1284.5V294.5V324.5V294.5H1285.5V455.5V284.5V454.5H1286.5V453.5V454.5V453.5H1287.5V407.5V453.5V407.5H1288.5V344.5V407.5V344.5H1289.5V305.5V344.5V305.5H1290.5V284.5V305.5V284.5H1291.5V455.5V284.5V454.5H1292.5V443.5V454.5V443.5H1293.5V365.5V443.5V365.5H1294.5V318.5V365.5V318.5H1295.5V290.5V318.5V290.5H1296.5V455.5V283.5V454.5H1297.5V453.5V454.5V453.5H1298.5V396.5V453.5V396.5H1299.5V337.5V396.5V337.5H1300.5V302.5V337.5V302.5H1301.5V284.5V302.5V284.5H1302.5V455.5V284.5V454.5H1303.5V433.5V454.5V433.5H1304.5V360.5V433.5V360.5H1305.5V315.5V360.5V315.5H1306.5V288.5V315.5V288.5H1307.5V455.5V284.5V454.5H1308.5V453.5V454.5V453.5H1309.5V388.5V453.5V388.5H1310.5V333.5V388.5V333.5H1311.5V299.5V333.5V299.5H1312.5V455.5V284.5V455.5H1313.5V453.5V455.5V453.5H1314.5V424.5V453.5V424.5H1315.5V354.5V424.5V354.5H1316.5V311.5V354.5V311.5H1317.5V285.5V311.5V285.5H1318.5V455.5V283.5V454.5H1319.5V453.5V454.5V453.5H1320.5V381.5V453.5V381.5H1321.5V327.5V381.5V327.5H1322.5V295.5V327.5V295.5H1323.5V455.5V283.5V455.5H1324.5V453.5V455.5V453.5H1325.5V411.5V453.5V411.5H1326.5V346.5V411.5V346.5H1327.5V306.5V346.5V306.5H1328.5V283.5V306.5V283.5H1329.5V455.5V283.5V454.5H1330.5V453.5V454.5V453.5H1331.5H1332.5H1333.5V391.5V453.5V391.5H1334.5V334.5V391.5V334.5H1335.5V299.5V334.5V299.5H1336.5V455.5V283.5V455.5H1337.5V454.5V455.5V454.5H1338.5V429.5V454.5V429.5H1339.5V357.5V429.5V357.5H1340.5V313.5V357.5V313.5H1341.5V287.5V313.5V287.5H1342.5V455.5V284.5V454.5H1343.5V453.5V454.5V453.5H1344.5V385.5V453.5V385.5H1345.5V330.5V385.5V330.5H1346.5V297.5V330.5V297.5H1347.5V455.5V284.5V455.5H1348.5V453.5V455.5V453.5H1349.5V420.5V453.5V420.5H1350.5V351.5V420.5V351.5H1351.5V310.5V351.5V310.5H1352.5V285.5V310.5V285.5H1353.5V455.5V284.5V454.5H1354.5V453.5V454.5V453.5H1355.5V374.5V453.5V374.5H1356.5V323.5V374.5V323.5H1357.5V292.5V323.5V292.5H1358.5V455.5V283.5V454.5H1359.5V453.5V454.5V453.5H1360.5V407.5V453.5V407.5H1361.5V344.5V407.5V344.5H1362.5V306.5V344.5V306.5H1363.5V284.5V306.5V284.5H1364.5V455.5V284.5V454.5H1365.5V448.5V454.5V448.5H1366.5V368.5V448.5V368.5H1367.5V320.5V368.5V320.5H1368.5V291.5V320.5V291.5H1369.5V455.5V284.5V454.5H1370.5V453.5V454.5V453.5H1371.5V399.5V453.5V399.5H1372.5V339.5V399.5V339.5H1373.5V303.5V339.5V303.5H1374.5V284.5V303.5V284.5H1375.5V455.5V284.5V454.5H1376.5V438.5V454.5V438.5H1377.5V362.5V438.5V362.5H1378.5V316.5V362.5V316.5H1379.5V288.5V316.5V288.5H1380.5V455.5V282.5V454.5H1381.5V453.5V454.5V453.5H1382.5H1383.5H1384.5V411.5V453.5V411.5H1385.5V345.5V411.5V345.5H1386.5V306.5V345.5V306.5H1387.5V283.5V306.5V283.5H1388.5V455.5V283.5V454.5H1389.5V453.5V454.5V453.5H1390.5V372.5V453.5V372.5H1391.5V322.5V372.5V322.5H1392.5V292.5V322.5V292.5H1393.5V455.5V284.5V454.5H1394.5V453.5V454.5V453.5H1395.5V403.5V453.5V403.5H1396.5V341.5V403.5V341.5H1397.5V303.5V341.5V303.5H1398.5V283.5V303.5V283.5H1399.5V455.5V283.5V454.5H1400.5V443.5V454.5V443.5H1401.5V365.5V443.5V365.5H1402.5V317.5V365.5V317.5H1403.5V289.5V317.5V289.5H1404.5V455.5V282.5V454.5H1405.5V453.5V454.5V453.5H1406.5V396.5V453.5V396.5H1407.5V337.5V396.5V337.5H1408.5V301.5V337.5V301.5H1409.5V284.5V301.5V284.5H1410.5V455.5V284.5V454.5H1411.5V433.5V454.5V433.5H1412.5V359.5V433.5V359.5H1413.5V314.5V359.5V314.5H1414.5V287.5V314.5V287.5H1415.5V455.5V283.5V454.5H1416.5V453.5V454.5V453.5H1417.5V385.5V453.5V385.5H1418.5V330.5V385.5V330.5H1419.5V297.5V330.5V297.5H1420.5V455.5V283.5V455.5H1421.5V453.5V455.5V453.5H1422.5V419.5V453.5V419.5H1423.5V351.5V419.5V351.5H1424.5V309.5V351.5V309.5H1425.5V283.5V309.5V283.5H1426.5V455.5V282.5V454.5H1427.5V453.5V454.5V453.5H1428.5V377.5V453.5V377.5H1429.5V325.5V377.5V325.5H1430.5V293.5V325.5V293.5H1431.5V455.5V282.5V454.5H1432.5V453.5V454.5V453.5H1433.5H1434.5H1435.5V452.5V453.5V452.5H1436.5H1437.5V377.5V452.5V377.5H1438.5V320.5V377.5V320.5H1439.5V289.5V320.5V289.5H1440.5V275.5V289.5V275.5H1441.5H1442.5V277.5V275.5V277.5H1443.5H1444.5H1445.5H1446.5H1447.5H1448.5H1449.5H1450.5H1451.5H1452.5H1453.5H1454.5H1455.5H1456.5H1457.5H1458.5H1459.5H1460.5H1461.5H1462.5H1463.5H1464.5H1465.5H1466.5H1467.5H1468.5H1469.5H1470.5H1471.5H1472.5H1473.5H1474.5H1475.5H1476.5H1477.5H1478.5H1479.5H1480.5H1481.5H1482.5H1483.5H1484.5H1485.5H1486.5H1487.5H1488.5H1489.5H1490.5H1491.5H1492.5H1493.5H1494.5H1495.5H1496.5H1497.5H1498.5H1499.5H1500.5H1501.5H1502.5H1503.5H1504.5H1505.5H1506.5H1507.5H1508.5H1509.5H1510.5H1511.5H1512.5V278.5V277.5H1513.5V278.5V277.5H1514.5H1515.5H1516.5H1517.5H1518.5V278.5V277.5V278.5H1519.5V277.5V278.5V277.5H1520.5V278.5V277.5V278.5H1521.5H1522.5H1523.5H1524.5H1525.5H1526.5H1527.5H1528.5H1529.5H1530.5H1531.5H1532.5H1533.5H1534.5H1535.5H1536.5H1537.5H1538.5H1539.5H1540.5H1541.5H1542.5H1543.5H1544.5H1545.5H1546.5H1547.5H1548.5H1549.5H1550.5H1551.5H1552.5H1553.5H1554.5H1555.5H1556.5H1557.5H1558.5H1559.5H1560.5H1561.5H1562.5H1563.5H1564.5H1565.5H1566.5H1567.5H1568.5H1569.5H1570.5H1571.5H1572.5H1573.5H1574.5H1575.5H1576.5H1577.5H1578.5H1579.5H1580.5H1581.5H1582.5H1583.5H1584.5H1585.5H1586.5H1587.5H1588.5H1589.5H1590.5H1591.5H1592.5H1593.5H1594.5H1595.5H1596.5H1597.5H1598.5H1599.5H1600.5H1601.5H1602.5H1603.5H1604.5H1605.5H1606.5H1607.5H1608.5H1609.5H1610.5H1611.5H1612.5H1613.5H1614.5H1615.5H1616.5H1617.5H1618.5H1619.5H1620.5H1621.5H1622.5H1623.5H1624.5H1625.5H1626.5H1627.5H1628.5H1629.5H1630.5H1631.5H1632.5H1633.5H1634.5H1635.5H1636.5H1637.5H1638.5H1639.5H1640.5H1641.5H1642.5H1643.5H1644.5H1645.5H1646.5H1647.5H1648.5H1649.5H1650.5H1651.5V277.5V278.5V277.5H1652.5V278.5V277.5V278.5H1653.5H1654.5H1655.5H1656.5V277.5V278.5V277.5H1657.5V278.5V277.5V278.5H1658.5V277.5V278.5V277.5H1659.5H1660.5V278.5V277.5V278.5H1661.5H1662.5H1663.5H1664.5V277.5V278.5V277.5H1665.5H1666.5V278.5V277.5V278.5H1667.5V277.5V278.5V277.5H1668.5V278.5V277.5V278.5H1669.5V277.5V278.5V277.5H1670.5H1671.5H1672.5V278.5V277.5V278.5H1673.5V277.5V278.5V277.5H1674.5H1675.5H1676.5H1677.5H1678.5H1679.5H1680.5H1681.5H1682.5H1683.5H1684.5H1685.5H1686.5H1687.5H1688.5H1689.5H1690.5H1691.5H1692.5H1693.5H1694.5H1695.5H1696.5H1697.5H1698.5H1699.5H1700.5H1701.5H1702.5H1703.5H1704.5H1705.5H1706.5H1707.5H1708.5H1709.5H1710.5H1711.5H1712.5H1713.5H1714.5H1715.5H1716.5H1717.5H1718.5H1719.5H1720.5H1721.5H1722.5H1723.5H1724.5H1725.5H1726.5H1727.5H1728.5H1729.5H1730.5H1731.5H1732.5" fill="none" stroke="#e60028" stroke-width="1.25" stroke-linejoin="miter"/>
<path d="M37.5 277.5V276.5V277.5V276.5H38.5H39.5H40.5H41.5H42.5H43.5H44.5H45.5H46.5V275.5V276.5V275.5H47.5V276.5V275.5V276.5H48.5H49.5H50.5H51.5H52.5H53.5H54.5H55.5H56.5H57.5H58.5H59.5H60.5H61.5V275.5V276.5V275.5H62.5V276.5V275.5V276.5H63.5V277.5V276.5V277.5H64.5V276.5V277.5V276.5H65.5H66.5H67.5H68.5H69.5H70.5V275.5V276.5V275.5H71.5V276.5V275.5V276.5H72.5H73.5H74.5H75.5H76.5H77.5H78.5H79.5H80.5V277.5V276.5V277.5H81.5V276.5V277.5V276.5H82.5H83.5H84.5H85.5H86.5H87.5V275.5V276.5V275.5H88.5V276.5V275.5V276.5H89.5H90.5V277.5V276.5V277.5H91.5V276.5V277.5V276.5H92.5H93.5H94.5H95.5H96.5H97.5H98.5H99.5H100.5H101.5V277.5V276.5V277.5H102.5H103.5H104.5H105.5V278.5V277.5V278.5H106.5V277.5V278.5V277.5H107.5V278.5V277.5V278.5H108.5H109.5H110.5H111.5V279.5V278.5V279.5H112.5V278.5V279.5V278.5H113.5H114.5V279.5V278.5V279.5H115.5H116.5H117.5H118.5H119.5V280.5V279.5V280.5H120.5H121.5H122.5H123.5V281.5V280.5V281.5H124.5H125.5H126.5V280.5V281.5V280.5H127.5V281.5V280.5V281.5H128.5H129.5H130.5H131.5V282.5V281.5V282.5H132.5H133.5V283.5V282.5V283.5H134.5V282.5V283.5V282.5H135.5V283.5V282.5H136.5V283.5V282.5V283.5H137.5H138.5H139.5H140.5V284.5V283.5H141.5V284.5V283.5V284.5H142.5H143.5H144.5V285.5V284.5V285.5H145.5H146.5H147.5H148.5H149.5H150.5H151.5V286.5V285.5V286.5H152.5H153.5H154.5H155.5V287.5V286.5V287.5H156.5H157.5H158.5V288.5V287.5V288.5H159.5V287.5V288.5V287.5H160.5V288.5V287.5V288.5H161.5H162.5H163.5V289.5V288.5V289.5H164.5V288.5V289.5V288.5H165.5H166.5V289.5V288.5V289.5H167.5H168.5H169.5H170.5V290.5V289.5H171.5V290.5V289.5H172.5H173.5V290.5V289.5V290.5H174.5V291.5V290.5V291.5H175.5H176.5H177.5V290.5V291.5V290.5H178.5V291.5V290.5H179.5V291.5V290.5V291.5H180.5V292.5V291.5H181.5V292.5V291.5H182.5V292.5V291.5V292.5H183.5H184.5H185.5H186.5H187.5V293.5V292.5H188.5H189.5V293.5V292.5V293.5H190.5H191.5V292.5V293.5V292.5H192.5V293.5V292.5V293.5H193.5H194.5V294.5V293.5V294.5H195.5V293.5V294.5V293.5H196.5V294.5V293.5H197.5V294.5V293.5V294.5H198.5H199.5H200.5H201.5H202.5H203.5V293.5V294.5V293.5H204.5V294.5V293.5V294.5H205.5H206.5H207.5H208.5H209.5H210.5H211.5V295.5V294.5V295.5H212.5V294.5V295.5V294.5H213.5V295.5V294.5V295.5H214.5H215.5H216.5V294.5V295.5V294.5H217.5H218.5H219.5V295.5V294.5V295.5H220.5H221.5H222.5H223.5H224.5V294.5V295.5V294.5H225.5V295.5V294.5V295.5H226.5V294.5V295.5V294.5H227.5V295.5V294.5V295.5H228.5H229.5H230.5H231.5H232.5H233.5H234.5H235.5H236.5H237.5H238.5H239.5H240.5H241.5V296.5V295.5V296.5H242.5V295.5V296.5V295.5H243.5H244.5H245.5H246.5H247.5H248.5H249.5H250.5H251.5H252.5H253.5H254.5H255.5H256.5H257.5H258.5H259.5V296.5V295.5V296.5H260.5H261.5H262.5V295.5V296.5V295.5H263.5H264.5H265.5H266.5H267.5H268.5H269.5V296.5V295.5V296.5H270.5V295.5V296.5V295.5H271.5H272.5H273.5H274.5H275.5V296.5V295.5V296.5H276.5V295.5V296.5V295.5H277.5H278.5H279.5V296.5V295.5V296.5H280.5V295.5V296.5V295.5H281.5H282.5V296.5V295.5V296.5H283.5H284.5V295.5V296.5V295.5H285.5H286.5H287.5H288.5V296.5V295.5V296.5H289.5V295.5V296.5V295.5H290.5H291.5H292.5H293.5V296.5V295.5V296.5H294.5V295.5V296.5V295.5H295.5V296.5V295.5V296.5H296.5V295.5V296.5V295.5H297.5V296.5V295.5V296.5H298.5V295.5V296.5V295.5H299.5H300.5H301.5H302.5H303.5V296.5V295.5V296.5H304.5H305.5V295.5V296.5V295.5H306.5H307.5H308.5H309.5H310.5V294.5V295.5V294.5H311.5V295.5V294.5V295.5H312.5H313.5H314.5H315.5H316.5H317.5H318.5H319.5H320.5H321.5H322.5V294.5V295.5V294.5H323.5V295.5V294.5V295.5H324.5V294.5V295.5V294.5H325.5V295.5V294.5V295.5H326.5H327.5V294.5V295.5V294.5H328.5H329.5H330.5H331.5H332.5V295.5V294.5V295.5H333.5V294.5V295.5V294.5H334.5H335.5H336.5H337.5H338.5H339.5V295.5V294.5V295.5H340.5V294.5V295.5V294.5H341.5H342.5H343.5H344.5H345.5H346.5H347.5H348.5H349.5V295.5V294.5V295.5H350.5V294.5V295.5V294.5H351.5H352.5H353.5H354.5H355.5H356.5H357.5H358.5H359.5H360.5H361.5V293.5V294.5V293.5H362.5H363.5V294.5V293.5V294.5H364.5H365.5V293.5V294.5V293.5H366.5H367.5V294.5V293.5V294.5H368.5H369.5H370.5V293.5V294.5V293.5H371.5H372.5H373.5V294.5V293.5V294.5H374.5H375.5H376.5V293.5V294.5V293.5H377.5H378.5V294.5V293.5V294.5H379.5H380.5V293.5V294.5V293.5H381.5H382.5H383.5H384.5H385.5H386.5H387.5H388.5H389.5H390.5V456.5V293.5V455.5H391.5V453.5V455.5V453.5H392.5H393.5V452.5V453.5V452.5H394.5H395.5V451.5V452.5V451.5H396.5H397.5H398.5H399.5H400.5H401.5H402.5H403.5H404.5H405.5H406.5H407.5H408.5H409.5H410.5H411.5V402.5V451.5V402.5H412.5V347.5V402.5V347.5H413.5V315.5V347.5V315.5H414.5V295.5V315.5V295.5H415.5V291.5V295.5V291.5H416.5V295.5V291.5V295.5H417.5V293.5V295.5V293.5H418.5H419.5V291.5V293.5V291.5H420.5H421.5V296.5V290.5V296.5H422.5V293.5V296.5V293.5H423.5H424.5V291.5V293.5V291.5H425.5H426.5V290.5V291.5H427.5V295.5V291.5V295.5H428.5V293.5V295.5V293.5H429.5H430.5V291.5V293.5V291.5H431.5H432.5V296.5V290.5V296.5H433.5V456.5V296.5V455.5H434.5V454.5V455.5V454.5H435.5V453.5V454.5V453.5H436.5V452.5V453.5V452.5H437.5H438.5H439.5V451.5V452.5V451.5H440.5V456.5V316.5V455.5H441.5V454.5V455.5V454.5H442.5V453.5V454.5V453.5H443.5V452.5V453.5V452.5H444.5H445.5H446.5V451.5V452.5V451.5H447.5V393.5V451.5V393.5H448.5V345.5V393.5V345.5H449.5V315.5V345.5V315.5H450.5V296.5V315.5V296.5H451.5V290.5V296.5V290.5H452.5V456.5V290.5V456.5H453.5V454.5V456.5V454.5H454.5V453.5V454.5V453.5H455.5V452.5V453.5V452.5H456.5H457.5H458.5V451.5V452.5V451.5H459.5H460.5H461.5H462.5H463.5H464.5H465.5H466.5H467.5H468.5H469.5H470.5H471.5H472.5H473.5V424.5V451.5V424.5H474.5V372.5V424.5V372.5H475.5V337.5V372.5V337.5H476.5V313.5V337.5V313.5H477.5V297.5V313.5V297.5H478.5V289.5V297.5V289.5H479.5V456.5V289.5V455.5H480.5V454.5V455.5V454.5H481.5V453.5V454.5V453.5H482.5V452.5V453.5V452.5H483.5H484.5H485.5V451.5V452.5V451.5H486.5H487.5H488.5H489.5H490.5H491.5H492.5H493.5H494.5H495.5H496.5H497.5H498.5V456.5V302.5V455.5H499.5V454.5V455.5V454.5H500.5V453.5V454.5V453.5H501.5V452.5V453.5V452.5H502.5H503.5H504.5V451.5V452.5V451.5H505.5H506.5H507.5H508.5H509.5H510.5H511.5H512.5H513.5H514.5H515.5H516.5H517.5H518.5H519.5H520.5H521.5H522.5H523.5H524.5H525.5H526.5H527.5H528.5H529.5H530.5V388.5V451.5V388.5H531.5V346.5V388.5V346.5H532.5V318.5V346.5V318.5H533.5V299.5V318.5V299.5H534.5V287.5V299.5V287.5H535.5H536.5V456.5V287.5V455.5H537.5V454.5V455.5V454.5H538.5V453.5V454.5V453.5H539.5V452.5V453.5V452.5H540.5H541.5H542.5V451.5V452.5V451.5H543.5H544.5H545.5H546.5H547.5H548.5H549.5H550.5H551.5H552.5H553.5H554.5H555.5H556.5H557.5H558.5H559.5H560.5H561.5H562.5H563.5H564.5H565.5H566.5H567.5H568.5H569.5H570.5H571.5H572.5H573.5H574.5H575.5H576.5H577.5H578.5H579.5H580.5H581.5H582.5H583.5V381.5V451.5V381.5H584.5V337.5V381.5V337.5H585.5V309.5V337.5V309.5H586.5V291.5V309.5V291.5H587.5V286.5V291.5V286.5H588.5V456.5V286.5V455.5H589.5V454.5V455.5V454.5H590.5V453.5V454.5V453.5H591.5V452.5V453.5V452.5H592.5H593.5H594.5V451.5V452.5V451.5H595.5H596.5H597.5H598.5H599.5H600.5H601.5H602.5H603.5H604.5H605.5H606.5V421.5V451.5V421.5H607.5V353.5V421.5V353.5H608.5V317.5V353.5V317.5H609.5V297.5V317.5V297.5H610.5V287.5V297.5V287.5H611.5H612.5H613.5H614.5H615.5H616.5H617.5H618.5H619.5H620.5H621.5H622.5V288.5V287.5V288.5H623.5V287.5V288.5V287.5H624.5H625.5H626.5V456.5V287.5V455.5H627.5V453.5V455.5V453.5H628.5H629.5V452.5V453.5V452.5H630.5H631.5V451.5V452.5V451.5H632.5H633.5H634.5H635.5H636.5H637.5H638.5H639.5H640.5H641.5H642.5H643.5H644.5H645.5H646.5H647.5H648.5V384.5V451.5V384.5H649.5V332.5V384.5V332.5H650.5V301.5V332.5V301.5H651.5V285.5V301.5V285.5H652.5V289.5V285.5V289.5H653.5V287.5V289.5V287.5H654.5H655.5V285.5V287.5V285.5H656.5H657.5V284.5V285.5H658.5V289.5V285.5V289.5H659.5V287.5V289.5V287.5H660.5H661.5V285.5V287.5V285.5H662.5H663.5V290.5V284.5V290.5H664.5V287.5V290.5V287.5H665.5H666.5V285.5V287.5V285.5H667.5H668.5V284.5V285.5H669.5V456.5V285.5V455.5H670.5V454.5V455.5V454.5H671.5V453.5V454.5V453.5H672.5V452.5V453.5V452.5H673.5H674.5H675.5V451.5V452.5V451.5H676.5V366.5V451.5V366.5H677.5V319.5V366.5V319.5H678.5V292.5V319.5V292.5H679.5V286.5V292.5V286.5H680.5H681.5V456.5V286.5V455.5H682.5V454.5V455.5V454.5H683.5V453.5V454.5V453.5H684.5V452.5V453.5V452.5H685.5H686.5H687.5V403.5V452.5V403.5H688.5V329.5V403.5V329.5H689.5V293.5V329.5V293.5H690.5V285.5V293.5V285.5H691.5H692.5V456.5V285.5V455.5H693.5V454.5V455.5V454.5H694.5V453.5V454.5V453.5H695.5V452.5V453.5V452.5H696.5H697.5H698.5V451.5V452.5V451.5H699.5V381.5V451.5V381.5H700.5V333.5V381.5V333.5H701.5V303.5V333.5V303.5H702.5V285.5V303.5V285.5H703.5V456.5V284.5V456.5H704.5V454.5V456.5V454.5H705.5V453.5V454.5V453.5H706.5V452.5V453.5V452.5H707.5H708.5H709.5V451.5V452.5V451.5H710.5V347.5V451.5V347.5H711.5V299.5V347.5V299.5H712.5V284.5V299.5V284.5H713.5H714.5V456.5V284.5V455.5H715.5V453.5V455.5V453.5H716.5H717.5V452.5V453.5V452.5H718.5H719.5V451.5V452.5V451.5H720.5V439.5V451.5V439.5H721.5V350.5V439.5V350.5H722.5V305.5V350.5V305.5H723.5V284.5V305.5V284.5H724.5H725.5V456.5V284.5V456.5H726.5V454.5V456.5V454.5H727.5V453.5V454.5V453.5H728.5V452.5V453.5V452.5H729.5H730.5H731.5V451.5V452.5V451.5H732.5H733.5H734.5H735.5H736.5H737.5H738.5V456.5V298.5V455.5H739.5V454.5V455.5V454.5H740.5V453.5V454.5V453.5H741.5V452.5V453.5V452.5H742.5H743.5H744.5V451.5V452.5V451.5H745.5H746.5H747.5H748.5H749.5H750.5H751.5H752.5H753.5H754.5H755.5H756.5H757.5H758.5H759.5H760.5V439.5V451.5V439.5H761.5V352.5V439.5V352.5H762.5V307.5V352.5V307.5H763.5V283.5V307.5V283.5H764.5H765.5V456.5V283.5V456.5H766.5V454.5V456.5V454.5H767.5V453.5V454.5V453.5H768.5V452.5V453.5V452.5H769.5H770.5H771.5V451.5V452.5V451.5H772.5V391.5V451.5V391.5H773.5V321.5V391.5V321.5H774.5V287.5V321.5V287.5H775.5V283.5V287.5V283.5H776.5V456.5V283.5V455.5H777.5V454.5V455.5V454.5H778.5V453.5V454.5V453.5H779.5V452.5V453.5V452.5H780.5H781.5H782.5V451.5V452.5V451.5H783.5H784.5H785.5H786.5H787.5H788.5H789.5H790.5H791.5H792.5H793.5H794.5H795.5H796.5H797.5H798.5H799.5H800.5H801.5H802.5H803.5H804.5H805.5H806.5H807.5H808.5H809.5H810.5H811.5H812.5H813.5H814.5H815.5H816.5H817.5H818.5H819.5H820.5H821.5H822.5H823.5H824.5H825.5H826.5H827.5H828.5V427.5V451.5V427.5H829.5V346.5V427.5V346.5H830.5V303.5V346.5V303.5H831.5V282.5V303.5V282.5H832.5H833.5V456.5V282.5V455.5H834.5V454.5V455.5V454.5H835.5V453.5V454.5V453.5H836.5V452.5V453.5V452.5H837.5H838.5H839.5V451.5V452.5V451.5H840.5H841.5H842.5H843.5H844.5H845.5H846.5H847.5V439.5V451.5V439.5H848.5V353.5V439.5V353.5H849.5V307.5V353.5V307.5H850.5V283.5V307.5V283.5H851.5H852.5H853.5H854.5H855.5H856.5H857.5H858.5H859.5H860.5H861.5H862.5H863.5H864.5H865.5H866.5V456.5V283.5V455.5H867.5V453.5V455.5V453.5H868.5H869.5V452.5V453.5V452.5H870.5H871.5V451.5V452.5V451.5H872.5H873.5H874.5H875.5H876.5H877.5H878.5H879.5H880.5H881.5H882.5H883.5H884.5H885.5H886.5H887.5H888.5V376.5V451.5V376.5H889.5V320.5V376.5V320.5H890.5V290.5V320.5V290.5H891.5V281.5V290.5V281.5H892.5V286.5V281.5V286.5H893.5V283.5V286.5V283.5H894.5H895.5V281.5V283.5V281.5H896.5H897.5V280.5V281.5H898.5V286.5V281.5V286.5H899.5V283.5V286.5V283.5H900.5H901.5V281.5V283.5V281.5H902.5H903.5V286.5V280.5V286.5H904.5V283.5V286.5V283.5H905.5H906.5V281.5V283.5V281.5H907.5H908.5V280.5V281.5H909.5V456.5V281.5V455.5H910.5V454.5V455.5V454.5H911.5V453.5V454.5V453.5H912.5V452.5V453.5V452.5H913.5H914.5H915.5V386.5V452.5V386.5H916.5V322.5V386.5V322.5H917.5V289.5V322.5V289.5H918.5V281.5V289.5V281.5H919.5H920.5H921.5H922.5V456.5V281.5V455.5H923.5V453.5V455.5V453.5H924.5H925.5V452.5V453.5V452.5H926.5H927.5V451.5V452.5V451.5H928.5H929.5V406.5V451.5V406.5H930.5V333.5V406.5V333.5H931.5V295.5V333.5V295.5H932.5V280.5V295.5V280.5H933.5H934.5V456.5V280.5V455.5H935.5V454.5V455.5V454.5H936.5V453.5V454.5V453.5H937.5V452.5V453.5V452.5H938.5H939.5H940.5V451.5V452.5V451.5H941.5H942.5H943.5H944.5H945.5H946.5H947.5H948.5H949.5H950.5H951.5H952.5H953.5H954.5H955.5H956.5H957.5H958.5H959.5H960.5V442.5V451.5V442.5H961.5V373.5V442.5V373.5H962.5V328.5V373.5V328.5H963.5V300.5V328.5V300.5H964.5V282.5V300.5V282.5H965.5V279.5V282.5V279.5H966.5V456.5V279.5V455.5H967.5V454.5V455.5V454.5H968.5V453.5V454.5V453.5H969.5V452.5V453.5V452.5H970.5H971.5H972.5V451.5V452.5V451.5H973.5H974.5H975.5H976.5H977.5H978.5H979.5H980.5V456.5V292.5V455.5H981.5V454.5V455.5V454.5H982.5V453.5V454.5V453.5H983.5V452.5V453.5V452.5H984.5H985.5H986.5V354.5V452.5V354.5H987.5V304.5V354.5V304.5H988.5V279.5V304.5V279.5H989.5H990.5H991.5H992.5V283.5V279.5V283.5H993.5V281.5V283.5V281.5H994.5H995.5V279.5V281.5V279.5H996.5V456.5V279.5V455.5H997.5V453.5V455.5V453.5H998.5H999.5V452.5V453.5V452.5H1000.5H1001.5V451.5V452.5V451.5H1002.5H1003.5H1004.5H1005.5H1006.5H1007.5V369.5V451.5V369.5H1008.5V321.5V369.5V321.5H1009.5V292.5V321.5V292.5H1010.5V278.5V292.5V278.5H1011.5H1012.5V456.5V278.5V455.5H1013.5V453.5V455.5V453.5H1014.5H1015.5V452.5V453.5V452.5H1016.5H1017.5V451.5V452.5V451.5H1018.5H1019.5H1020.5H1021.5H1022.5H1023.5H1024.5H1025.5H1026.5H1027.5H1028.5H1029.5H1030.5H1031.5H1032.5H1033.5H1034.5H1035.5H1036.5H1037.5H1038.5H1039.5H1040.5H1041.5H1042.5H1043.5H1044.5H1045.5H1046.5H1047.5H1048.5H1049.5H1050.5H1051.5H1052.5H1053.5H1054.5H1055.5H1056.5H1057.5H1058.5H1059.5H1060.5H1061.5H1062.5H1063.5H1064.5H1065.5H1066.5H1067.5H1068.5H1069.5H1070.5H1071.5H1072.5H1073.5H1074.5H1075.5H1076.5H1077.5H1078.5H1079.5H1080.5H1081.5H1082.5H1083.5H1084.5H1085.5H1086.5H1087.5H1088.5H1089.5V373.5V451.5V373.5H1090.5V317.5V373.5V317.5H1091.5V286.5V317.5V286.5H1092.5V277.5V286.5V277.5H1093.5V278.5V277.5V278.5H1094.5H1095.5V277.5V278.5V277.5H1096.5H1097.5H1098.5H1099.5V278.5V277.5V278.5H1100.5V277.5V278.5V277.5H1101.5H1102.5H1103.5V278.5V277.5V278.5H1104.5V277.5V278.5V277.5H1105.5H1106.5H1107.5V278.5V277.5V278.5H1108.5V456.5V278.5V455.5H1109.5V453.5V455.5V453.5H1110.5H1111.5V452.5V453.5V452.5H1112.5H1113.5V451.5V452.5V451.5H1114.5H1115.5H1116.5H1117.5H1118.5H1119.5H1120.5H1121.5H1122.5H1123.5H1124.5H1125.5H1126.5H1127.5H1128.5H1129.5H1130.5V390.5V451.5V390.5H1131.5V318.5V390.5V318.5H1132.5V282.5V318.5V282.5H1133.5V276.5V280.5H1134.5V278.5V280.5V278.5H1135.5H1136.5V276.5V278.5V276.5H1137.5H1138.5V274.5V276.5H1139.5V280.5V276.5V280.5H1140.5V278.5V280.5V278.5H1141.5H1142.5V276.5V278.5V276.5H1143.5H1144.5V281.5V274.5V281.5H1145.5V278.5V281.5V278.5H1146.5H1147.5V276.5V278.5V276.5H1148.5H1149.5V274.5V276.5H1150.5V280.5V276.5V280.5H1151.5V456.5V280.5V455.5H1152.5V454.5V455.5V454.5H1153.5V453.5V454.5V453.5H1154.5V452.5V453.5V452.5H1155.5H1156.5H1157.5V384.5V452.5V384.5H1158.5V318.5V384.5V318.5H1159.5V284.5V318.5V284.5H1160.5V276.5V284.5V276.5H1161.5H1162.5V456.5V276.5V455.5H1163.5V453.5V455.5V453.5H1164.5H1165.5V452.5V453.5V452.5H1166.5H1167.5V451.5V452.5V451.5H1168.5H1169.5H1170.5H1171.5V359.5V451.5V359.5H1172.5V309.5V359.5V309.5H1173.5V283.5V309.5V283.5H1174.5V276.5V283.5V276.5H1175.5H1176.5H1177.5H1178.5V277.5V276.5V277.5H1179.5V276.5V277.5V276.5H1180.5V277.5V276.5V277.5H1181.5V276.5V277.5V276.5H1182.5H1183.5H1184.5V277.5V276.5V277.5H1185.5V276.5V277.5V276.5H1186.5H1187.5H1188.5H1189.5H1190.5V456.5V276.5V455.5H1191.5V454.5V455.5V454.5H1192.5V453.5V454.5V453.5H1193.5V452.5V453.5V452.5H1194.5H1195.5H1196.5V451.5V452.5V451.5H1197.5H1198.5H1199.5H1200.5H1201.5H1202.5H1203.5H1204.5H1205.5H1206.5H1207.5H1208.5H1209.5H1210.5H1211.5H1212.5V384.5V451.5V384.5H1213.5V318.5V384.5V318.5H1214.5V284.5V318.5V284.5H1215.5V276.5V284.5V276.5H1216.5V280.5V276.5V280.5H1217.5V278.5V280.5V278.5H1218.5H1219.5V276.5V278.5V276.5H1220.5H1221.5V281.5V274.5V281.5H1222.5V278.5V281.5V278.5H1223.5H1224.5V276.5V278.5V276.5H1225.5H1226.5V280.5V274.5V280.5H1227.5V278.5V280.5V278.5H1228.5H1229.5V276.5V278.5V276.5H1230.5H1231.5V274.5V276.5H1232.5V280.5V276.5V280.5H1233.5V456.5V280.5V455.5H1234.5V454.5V455.5V454.5H1235.5V453.5V454.5V453.5H1236.5V452.5V453.5V452.5H1237.5H1238.5V440.5V452.5V440.5H1239.5V355.5V440.5V355.5H1240.5V307.5V355.5V307.5H1241.5V281.5V307.5V281.5H1242.5V276.5V281.5V276.5H1243.5H1244.5V275.5V276.5V275.5H1245.5H1246.5V276.5V275.5V276.5H1247.5H1248.5H1249.5H1250.5V275.5V276.5V275.5H1251.5V276.5V275.5V276.5H1252.5H1253.5H1254.5H1255.5H1256.5V275.5V276.5V275.5H1257.5V276.5V275.5V276.5H1258.5H1259.5H1260.5H1261.5H1262.5H1263.5H1264.5H1265.5H1266.5H1267.5H1268.5H1269.5H1270.5H1271.5H1272.5H1273.5H1274.5V456.5V276.5V455.5H1275.5V454.5V455.5V454.5H1276.5V453.5V454.5V453.5H1277.5V452.5V453.5V452.5H1278.5H1279.5H1280.5V451.5V452.5V451.5H1281.5V351.5V451.5V351.5H1282.5V300.5V351.5V300.5H1283.5V274.5V300.5V274.5H1284.5H1285.5V456.5V274.5V455.5H1286.5V454.5V455.5V454.5H1287.5V453.5V454.5V453.5H1288.5V452.5V453.5V452.5H1289.5H1290.5H1291.5V451.5V452.5V451.5H1292.5H1293.5H1294.5H1295.5H1296.5H1297.5H1298.5H1299.5H1300.5H1301.5H1302.5H1303.5H1304.5H1305.5H1306.5H1307.5H1308.5H1309.5H1310.5H1311.5H1312.5H1313.5V403.5V451.5V403.5H1314.5V327.5V403.5V327.5H1315.5V287.5V327.5V287.5H1316.5V274.5V287.5V274.5H1317.5H1318.5V456.5V274.5V455.5H1319.5V454.5V455.5V454.5H1320.5V453.5V454.5V453.5H1321.5V452.5V453.5V452.5H1322.5H1323.5H1324.5V451.5V452.5V451.5H1325.5H1326.5H1327.5H1328.5H1329.5H1330.5H1331.5V456.5V287.5V455.5H1332.5V454.5V455.5V454.5H1333.5V453.5V454.5V453.5H1334.5V452.5V453.5V452.5H1335.5H1336.5H1337.5V427.5V452.5V427.5H1338.5V341.5V427.5V341.5H1339.5V296.5V341.5V296.5H1340.5V274.5V296.5V274.5H1341.5V278.5V274.5V278.5H1342.5V276.5V278.5V276.5H1343.5H1344.5V274.5V276.5V274.5H1345.5H1346.5V278.5V273.5V278.5H1347.5V276.5V278.5V276.5H1348.5V456.5V276.5V455.5H1349.5V453.5V455.5V453.5H1350.5H1351.5V452.5V453.5V452.5H1352.5H1353.5V451.5V452.5V451.5H1354.5H1355.5H1356.5H1357.5H1358.5H1359.5V415.5V451.5V415.5H1360.5V335.5V415.5V335.5H1361.5V292.5V335.5V292.5H1362.5V274.5V292.5V274.5H1363.5H1364.5V456.5V274.5V455.5H1365.5V454.5V455.5V454.5H1366.5V453.5V454.5V453.5H1367.5V452.5V453.5V452.5H1368.5H1369.5H1370.5V451.5V452.5V451.5H1371.5H1372.5H1373.5H1374.5H1375.5H1376.5H1377.5H1378.5H1379.5H1380.5H1381.5H1382.5H1383.5H1384.5H1385.5H1386.5H1387.5H1388.5H1389.5V375.5V451.5V375.5H1390.5V312.5V375.5V312.5H1391.5V280.5V312.5V280.5H1392.5V274.5V280.5H1393.5V276.5V280.5V276.5H1394.5H1395.5V274.5V276.5V274.5H1396.5H1397.5V273.5V274.5H1398.5V278.5V274.5V278.5H1399.5V276.5V278.5V276.5H1400.5H1401.5V274.5V276.5V274.5H1402.5H1403.5V278.5V273.5V278.5H1404.5V276.5V278.5V276.5H1405.5H1406.5V274.5V276.5V274.5H1407.5H1408.5V273.5V274.5H1409.5V278.5V274.5V278.5H1410.5V456.5V278.5V455.5H1411.5V453.5V455.5V453.5H1412.5H1413.5V452.5V453.5V452.5H1414.5H1415.5V451.5V452.5V451.5H1416.5H1417.5H1418.5H1419.5H1420.5H1421.5H1422.5H1423.5H1424.5H1425.5H1426.5H1427.5H1428.5H1429.5H1430.5H1431.5H1432.5H1433.5H1434.5H1435.5H1436.5H1437.5H1438.5H1439.5H1440.5H1441.5V366.5V451.5V366.5H1442.5V306.5V366.5V306.5H1443.5V276.5V306.5V276.5H1444.5H1445.5V275.5V276.5V275.5H1446.5V277.5V275.5V277.5H1447.5V276.5V277.5V276.5H1448.5H1449.5H1450.5H1451.5V275.5V276.5V275.5H1452.5V276.5V275.5V276.5H1453.5H1454.5H1455.5H1456.5H1457.5H1458.5H1459.5H1460.5H1461.5H1462.5V275.5V276.5V275.5H1463.5V276.5V275.5V276.5H1464.5V275.5V276.5V275.5H1465.5V276.5V275.5V276.5H1466.5V275.5V276.5V275.5H1467.5V276.5V275.5V276.5H1468.5H1469.5H1470.5H1471.5H1472.5H1473.5H1474.5H1475.5H1476.5H1477.5H1478.5H1479.5H1480.5H1481.5H1482.5H1483.5H1484.5H1485.5H1486.5H1487.5H1488.5H1489.5H1490.5H1491.5V277.5V276.5V277.5H1492.5V276.5V277.5V276.5H1493.5V275.5V276.5V275.5H1494.5V276.5V275.5V276.5H1495.5H1496.5H1497.5H1498.5H1499.5H1500.5H1501.5H1502.5H1503.5H1504.5H1505.5H1506.5H1507.5H1508.5H1509.5H1510.5V277.5V276.5V277.5H1511.5V276.5V277.5V276.5H1512.5H1513.5V277.5V276.5V277.5H1514.5V276.5V277.5V276.5H1515.5V277.5V276.5V277.5H1516.5V276.5V277.5V276.5H1517.5H1518.5H1519.5H1520.5H1521.5V277.5V276.5V277.5H1522.5H1523.5H1524.5H1525.5V276.5V277.5V276.5H1526.5V277.5V276.5V277.5H1527.5V276.5V277.5V276.5H1528.5V277.5V276.5V277.5H1529.5V278.5V277.5V278.5H1530.5V276.5V278.5V276.5H1531.5V277.5V276.5V277.5H1532.5V276.5V277.5V276.5H1533.5V277.5V276.5V277.5H1534.5H1535.5V276.5V277.5V276.5H1536.5V277.5V276.5V277.5H1537.5H1538.5H1539.5H1540.5H1541.5H1542.5H1543.5H1544.5H1545.5H1546.5H1547.5H1548.5V278.5V277.5V278.5H1549.5V277.5V278.5V277.5H1550.5H1551.5H1552.5H1553.5H1554.5H1555.5V278.5V277.5V278.5H1556.5V277.5V278.5V277.5H1557.5H1558.5H1559.5H1560.5H1561.5H1562.5V278.5V277.5V278.5H1563.5V277.5V278.5V277.5H1564.5V276.5V277.5V276.5H1565.5V277.5V276.5V277.5H1566.5H1567.5H1568.5H1569.5H1570.5H1571.5H1572.5H1573.5H1574.5H1575.5H1576.5V276.5V277.5V276.5H1577.5V277.5V276.5V277.5H1578.5H1579.5H1580.5H1581.5H1582.5H1583.5V276.5V277.5V276.5H1584.5H1585.5V277.5V276.5V277.5H1586.5H1587.5H1588.5V276.5V277.5V276.5H1589.5V277.5V276.5V277.5H1590.5H1591.5H1592.5H1593.5H1594.5H1595.5V278.5V277.5V278.5H1596.5V277.5V278.5V277.5H1597.5H1598.5V276.5V277.5V276.5H1599.5H1600.5V277.5V276.5V277.5H1601.5V278.5V277.5V278.5H1602.5V277.5V278.5V277.5H1603.5H1604.5H1605.5H1606.5H1607.5H1608.5H1609.5H1610.5H1611.5H1612.5H1613.5H1614.5H1615.5H1616.5V276.5V277.5V276.5H1617.5H1618.5V277.5V276.5V277.5H1619.5H1620.5H1621.5V276.5V277.5V276.5H1622.5V277.5V276.5V277.5H1623.5H1624.5H1625.5H1626.5H1627.5H1628.5H1629.5H1630.5H1631.5H1632.5H1633.5H1634.5H1635.5H1636.5H1637.5H1638.5H1639.5H1640.5H1641.5H1642.5H1643.5H1644.5H1645.5H1646.5H1647.5H1648.5V276.5V277.5V276.5H1649.5V277.5V276.5V277.5H1650.5H1651.5H1652.5H1653.5V276.5V277.5H1654.5H1655.5V276.5V277.5V276.5H1656.5V277.5V276.5V277.5H1657.5H1658.5V276.5V277.5V276.5H1659.5H1660.5V277.5V276.5V277.5H1661.5H1662.5H1663.5V276.5V277.5V276.5H1664.5H1665.5H1666.5V277.5V276.5V277.5H1667.5V276.5V277.5V276.5H1668.5H1669.5V277.5V276.5V277.5H1670.5H1671.5V276.5V277.5V276.5H1672.5H1673.5H1674.5H1675.5V277.5V276.5V277.5H1676.5V276.5V277.5V276.5H1677.5V277.5V276.5V277.5H1678.5V276.5V277.5V276.5H1679.5H1680.5H1681.5H1682.5H1683.5H1684.5H1685.5H1686.5H1687.5V275.5V276.5V275.5H1688.5V276.5V275.5V276.5H1689.5H1690.5V275.5V276.5V275.5H1691.5V276.5V275.5V276.5H1692.5H1693.5H1694.5H1695.5H1696.5H1697.5H1698.5H1699.5H1700.5H1701.5H1702.5V275.5V276.5V275.5H1703.5V276.5V275.5V276.5H1704.5H1705.5H1706.5H1707.5H1708.5H1709.5H1710.5H1711.5V277.5V276.5V277.5H1712.5V276.5V277.5V276.5H1713.5H1714.5H1715.5H1716.5H1717.5H1718.5H1719.5H1720.5H1721.5H1722.5H1723.5H1724.5V277.5V276.5V277.5H1725.5V275.5V277.5V275.5H1726.5V276.5V275.5V276.5H1727.5H1728.5V275.5V276.5V275.5H1729.5V276.5V275.5V276.5H1730.5H1731.5V277.5V276.5V277.5H1732.5V275.5V277.5V275.5" fill="none" stroke="#11609f" stroke-width="1.25" stroke-linejoin="miter"/>
<path d="M390.5 410.5L395.5 416L390.5 421.5L385.5 416Z" fill="#fff200" stroke="#6a6a9a" stroke-width="0.9"/>
<line x1="37" y1="466.5" x2="390.3" y2="466.5" stroke="#000" stroke-width="1.4"/>
<line x1="609.1" y1="466.5" x2="626.2" y2="466.5" stroke="#000" stroke-width="1.4"/>
<line x1="848" y1="466.5" x2="866.2" y2="466.5" stroke="#000" stroke-width="1.4"/>
<line x1="1089.8" y1="466.5" x2="1107.4" y2="466.5" stroke="#000" stroke-width="1.4"/>
<line x1="1171.2" y1="466.5" x2="1189.8" y2="466.5" stroke="#000" stroke-width="1.4"/>
<line x1="1442" y1="466.5" x2="1733" y2="466.5" stroke="#000" stroke-width="1.4"/>
<path d="M390.30 466.5L391.56 461.90L393.30 456.5L606.10 456.5L607.84 461.90L609.10 466.5L607.84 471.10L606.10 476.5L393.30 476.5L391.56 471.10Z" fill="#fafafa" stroke="#000" stroke-width="1.1" stroke-linejoin="round"/>
<path d="M398.30 466.5L399.60 462.82L401.40 458.5L430.60 458.5L432.40 462.82L433.70 466.5L432.40 470.18L430.60 474.5L401.40 474.5L399.60 470.18Z" fill="#fba834" stroke="#0a0a0a" stroke-width="1" stroke-linejoin="round"/><text x="416.0" y="470.9" text-anchor="middle" font-size="12.5" fill="#45403a">0F</text>
<rect x="436" y="458" width="2" height="17" fill="#000"/>
<rect x="442" y="458" width="2" height="17" fill="#000"/>
<path d="M450.60 466.5L451.90 462.82L453.70 458.5L487.30 458.5L489.10 462.82L490.40 466.5L489.10 470.18L487.30 474.5L453.70 474.5L451.90 470.18Z" fill="#6471c5" stroke="#0a0a0a" stroke-width="1" stroke-linejoin="round"/><text x="470.5" y="470.9" text-anchor="middle" font-size="12.5" fill="#fff">84</text>
<rect x="494" y="458" width="2" height="17" fill="#000"/>
<path d="M502.40 466.5L503.70 462.82L505.50 458.5L538.50 458.5L540.30 462.82L541.60 466.5L540.30 470.18L538.50 474.5L505.50 474.5L503.70 470.18Z" fill="#6471c5" stroke="#0a0a0a" stroke-width="1" stroke-linejoin="round"/><text x="522.0" y="470.9" text-anchor="middle" font-size="12.5" fill="#fff">02</text>
<rect x="545" y="458" width="2" height="17" fill="#000"/>
<path d="M553.60 466.5L554.90 462.82L556.70 458.5L590.30 458.5L592.10 462.82L593.40 466.5L592.10 470.18L590.30 474.5L556.70 474.5L554.90 470.18Z" fill="#6471c5" stroke="#0a0a0a" stroke-width="1" stroke-linejoin="round"/><text x="573.5" y="470.9" text-anchor="middle" font-size="12.5" fill="#fff">02</text>
<rect x="596" y="458" width="2" height="17" fill="#000"/>
<path d="M626.20 466.5L627.46 461.90L629.20 456.5L845.00 456.5L846.74 461.90L848.00 466.5L846.74 471.10L845.00 476.5L629.20 476.5L627.46 471.10Z" fill="#fafafa" stroke="#000" stroke-width="1.1" stroke-linejoin="round"/>
<path d="M635.30 466.5L636.60 462.82L638.40 458.5L666.50 458.5L668.30 462.82L669.60 466.5L668.30 470.18L666.50 474.5L638.40 474.5L636.60 470.18Z" fill="#fba834" stroke="#0a0a0a" stroke-width="1" stroke-linejoin="round"/><text x="652.45" y="470.9" text-anchor="middle" font-size="12.5" fill="#45403a">0F</text>
<rect x="673" y="458" width="2" height="17" fill="#000"/>
<rect x="682" y="458" width="2" height="17" fill="#000"/>
<path d="M690.30 466.5L691.60 462.82L693.40 458.5L727.30 458.5L729.10 462.82L730.40 466.5L729.10 470.18L727.30 474.5L693.40 474.5L691.60 470.18Z" fill="#6471c5" stroke="#0a0a0a" stroke-width="1" stroke-linejoin="round"/><text x="710.35" y="470.9" text-anchor="middle" font-size="12.5" fill="#fff">AA</text>
<rect x="733" y="458" width="2" height="17" fill="#000"/>
<path d="M741.60 466.5L742.90 462.82L744.70 458.5L778.30 458.5L780.10 462.82L781.40 466.5L780.10 470.18L778.30 474.5L744.70 474.5L742.90 470.18Z" fill="#6471c5" stroke="#0a0a0a" stroke-width="1" stroke-linejoin="round"/><text x="761.5" y="470.9" text-anchor="middle" font-size="12.5" fill="#fff">0A</text>
<rect x="785" y="458" width="2" height="17" fill="#000"/>
<path d="M793.30 466.5L794.60 462.82L796.40 458.5L829.40 458.5L831.20 462.82L832.50 466.5L831.20 470.18L829.40 474.5L796.40 474.5L794.60 470.18Z" fill="#6471c5" stroke="#0a0a0a" stroke-width="1" stroke-linejoin="round"/><text x="812.9" y="470.9" text-anchor="middle" font-size="12.5" fill="#fff">01</text>
<rect x="836" y="458" width="2" height="17" fill="#000"/>
<path d="M866.20 466.5L867.46 461.90L869.20 456.5L1086.80 456.5L1088.54 461.90L1089.80 466.5L1088.54 471.10L1086.80 476.5L869.20 476.5L867.46 471.10Z" fill="#fafafa" stroke="#000" stroke-width="1.1" stroke-linejoin="round"/>
<path d="M874.60 466.5L875.90 462.82L877.70 458.5L906.20 458.5L908.00 462.82L909.30 466.5L908.00 470.18L906.20 474.5L877.70 474.5L875.90 470.18Z" fill="#fba834" stroke="#0a0a0a" stroke-width="1" stroke-linejoin="round"/><text x="891.95" y="470.9" text-anchor="middle" font-size="12.5" fill="#45403a">0F</text>
<rect x="912" y="458" width="2" height="17" fill="#000"/>
<rect x="924" y="458" width="2" height="17" fill="#000"/>
<path d="M932.70 466.5L934.00 462.82L935.80 458.5L968.40 458.5L970.20 462.82L971.50 466.5L970.20 470.18L968.40 474.5L935.80 474.5L934.00 470.18Z" fill="#6471c5" stroke="#0a0a0a" stroke-width="1" stroke-linejoin="round"/><text x="952.0999999999999" y="470.9" text-anchor="middle" font-size="12.5" fill="#fff">82</text>
<rect x="975" y="458" width="2" height="17" fill="#000"/>
<path d="M983.50 466.5L984.80 462.82L986.60 458.5L1020.20 458.5L1022.00 462.82L1023.30 466.5L1022.00 470.18L1020.20 474.5L986.60 474.5L984.80 470.18Z" fill="#6471c5" stroke="#0a0a0a" stroke-width="1" stroke-linejoin="round"/><text x="1003.4000000000001" y="470.9" text-anchor="middle" font-size="12.5" fill="#fff">64</text>
<rect x="1026" y="458" width="2" height="17" fill="#000"/>
<path d="M1034.20 466.5L1035.50 462.82L1037.30 458.5L1071.40 458.5L1073.20 462.82L1074.50 466.5L1073.20 470.18L1071.40 474.5L1037.30 474.5L1035.50 470.18Z" fill="#6471c5" stroke="#0a0a0a" stroke-width="1" stroke-linejoin="round"/><text x="1054.35" y="470.9" text-anchor="middle" font-size="12.5" fill="#fff">00</text>
<rect x="1078" y="458" width="2" height="17" fill="#000"/>
<path d="M1107.40 466.5L1108.66 461.90L1110.40 456.5L1168.20 456.5L1169.94 461.90L1171.20 466.5L1169.94 471.10L1168.20 476.5L1110.40 476.5L1108.66 471.10Z" fill="#fafafa" stroke="#000" stroke-width="1.1" stroke-linejoin="round"/>
<path d="M1116.50 466.5L1117.80 462.82L1119.60 458.5L1148.40 458.5L1150.20 462.82L1151.50 466.5L1150.20 470.18L1148.40 474.5L1119.60 474.5L1117.80 470.18Z" fill="#fba834" stroke="#0a0a0a" stroke-width="1" stroke-linejoin="round"/><text x="1134.0" y="470.9" text-anchor="middle" font-size="12.5" fill="#45403a">0F</text>
<rect x="1154" y="458" width="2" height="17" fill="#000"/>
<rect x="1160" y="458" width="2" height="17" fill="#000"/>
<path d="M1189.80 466.5L1191.06 461.90L1192.80 456.5L1439.00 456.5L1440.74 461.90L1442.00 466.5L1440.74 471.10L1439.00 476.5L1192.80 476.5L1191.06 471.10Z" fill="#fafafa" stroke="#000" stroke-width="1.1" stroke-linejoin="round"/>
<path d="M1198.50 466.5L1199.80 462.82L1201.60 458.5L1229.30 458.5L1231.10 462.82L1232.40 466.5L1231.10 470.18L1229.30 474.5L1201.60 474.5L1199.80 470.18Z" fill="#fba834" stroke="#0a0a0a" stroke-width="1" stroke-linejoin="round"/><text x="1215.45" y="470.9" text-anchor="middle" font-size="12.5" fill="#45403a">0F</text>
<rect x="1236" y="458" width="2" height="17" fill="#000"/>
<rect x="1275" y="458" width="2" height="17" fill="#000"/>
<path d="M1283.40 466.5L1284.70 462.82L1286.50 458.5L1320.10 458.5L1321.90 462.82L1323.20 466.5L1321.90 470.18L1320.10 474.5L1286.50 474.5L1284.70 470.18Z" fill="#6471c5" stroke="#0a0a0a" stroke-width="1" stroke-linejoin="round"/><text x="1303.3" y="470.9" text-anchor="middle" font-size="12.5" fill="#fff">82</text>
<rect x="1327" y="458" width="2" height="17" fill="#000"/>
<path d="M1334.40 466.5L1335.70 462.82L1337.50 458.5L1371.30 458.5L1373.10 462.82L1374.40 466.5L1373.10 470.18L1371.30 474.5L1337.50 474.5L1335.70 470.18Z" fill="#6471c5" stroke="#0a0a0a" stroke-width="1" stroke-linejoin="round"/><text x="1354.4" y="470.9" text-anchor="middle" font-size="12.5" fill="#fff">64</text>
<rect x="1378" y="458" width="2" height="17" fill="#000"/>
<path d="M1386.40 466.5L1387.70 462.82L1389.50 458.5L1423.40 458.5L1425.20 462.82L1426.50 466.5L1425.20 470.18L1423.40 474.5L1389.50 474.5L1387.70 470.18Z" fill="#6471c5" stroke="#0a0a0a" stroke-width="1" stroke-linejoin="round"/><text x="1406.4499999999998" y="470.9" text-anchor="middle" font-size="12.5" fill="#fff">78</text>
<rect x="1429" y="458" width="2" height="17" fill="#000"/>
<text x="37" y="489.5" font-size="12" fill="#11609f">I2C - Ch A/B</text>
<circle cx="121.3" cy="797.2" r="12.6" fill="#0a80cc"/><path d="M125 789.5L117.5 797.2L125 805" fill="none" stroke="#fff" stroke-width="1.1"/>
<circle cx="1649.3" cy="797.3" r="12.6" fill="#0a80cc"/><path d="M1646 789.5L1653.5 797.3L1646 805" fill="none" stroke="#fff" stroke-width="1.1"/>
<rect x="1457.5" y="570.5" width="286" height="182" rx="3.5" fill="#fff" stroke="#93bfe8" stroke-width="1"/>
<path d="M1457 587V574Q1457 570 1461 570H1740Q1744 570 1744 574V587Z" fill="#93bfe8"/>
<text x="1459.8" y="583.8" font-size="12.3" font-weight="bold" fill="#fff" stroke="#fff" stroke-width="0.35">Zoom</text>
<rect x="1698.5" y="578" width="9.5" height="1.4" fill="#cfe2f6"/>
<rect x="1714.3" y="576" width="10.3" height="5.6" fill="#fff"/>
<path d="M1731 574.2L1740 583.4M1740 574.2L1731 583.4" stroke="#fff" stroke-width="1.8" fill="none"/>
<line x1="1494.5" y1="597.5" x2="1494.5" y2="689.5" stroke="#a6d5e6" stroke-width="1" stroke-dasharray="3 3"/>
<line x1="1518.5" y1="597.5" x2="1518.5" y2="689.5" stroke="#a6d5e6" stroke-width="1" stroke-dasharray="3 3"/>
<line x1="1541.5" y1="597.5" x2="1541.5" y2="689.5" stroke="#a6d5e6" stroke-width="1" stroke-dasharray="3 3"/>
<line x1="1565.5" y1="597.5" x2="1565.5" y2="689.5" stroke="#a6d5e6" stroke-width="1" stroke-dasharray="3 3"/>
<line x1="1589.5" y1="597.5" x2="1589.5" y2="689.5" stroke="#a6d5e6" stroke-width="1" stroke-dasharray="3 3"/>
<line x1="1613.5" y1="597.5" x2="1613.5" y2="689.5" stroke="#a6d5e6" stroke-width="1" stroke-dasharray="3 3"/>
<line x1="1636.5" y1="597.5" x2="1636.5" y2="689.5" stroke="#a6d5e6" stroke-width="1" stroke-dasharray="3 3"/>
<line x1="1660.5" y1="597.5" x2="1660.5" y2="689.5" stroke="#a6d5e6" stroke-width="1" stroke-dasharray="3 3"/>
<line x1="1684.5" y1="597.5" x2="1684.5" y2="689.5" stroke="#a6d5e6" stroke-width="1" stroke-dasharray="3 3"/>
<line x1="1708.5" y1="597.5" x2="1708.5" y2="689.5" stroke="#a6d5e6" stroke-width="1" stroke-dasharray="3 3"/>
<line x1="1731.5" y1="597.5" x2="1731.5" y2="689.5" stroke="#a6d5e6" stroke-width="1" stroke-dasharray="3 3"/>
<line x1="1494.5" y1="597.5" x2="1731.9" y2="597.5" stroke="#a6d5e6" stroke-width="1" stroke-dasharray="3 3"/>
<line x1="1494.5" y1="606.5" x2="1731.9" y2="606.5" stroke="#a6d5e6" stroke-width="1" stroke-dasharray="3 3"/>
<line x1="1494.5" y1="615.5" x2="1731.9" y2="615.5" stroke="#a6d5e6" stroke-width="1" stroke-dasharray="3 3"/>
<line x1="1494.5" y1="625.5" x2="1731.9" y2="625.5" stroke="#a6d5e6" stroke-width="1" stroke-dasharray="3 3"/>
<line x1="1494.5" y1="634.5" x2="1731.9" y2="634.5" stroke="#a6d5e6" stroke-width="1" stroke-dasharray="3 3"/>
<line x1="1494.5" y1="643.5" x2="1731.9" y2="643.5" stroke="#a6d5e6" stroke-width="1" stroke-dasharray="3 3"/>
<line x1="1494.5" y1="652.5" x2="1731.9" y2="652.5" stroke="#a6d5e6" stroke-width="1" stroke-dasharray="3 3"/>
<line x1="1494.5" y1="661.5" x2="1731.9" y2="661.5" stroke="#a6d5e6" stroke-width="1" stroke-dasharray="3 3"/>
<line x1="1494.5" y1="671.5" x2="1731.9" y2="671.5" stroke="#a6d5e6" stroke-width="1" stroke-dasharray="3 3"/>
<line x1="1494.5" y1="680.5" x2="1731.9" y2="680.5" stroke="#a6d5e6" stroke-width="1" stroke-dasharray="3 3"/>
<line x1="1494.5" y1="689.5" x2="1731.9" y2="689.5" stroke="#a6d5e6" stroke-width="1" stroke-dasharray="3 3"/>
<path d="M1495.5 624.0L1496.5 624.5L1497.5 623.8L1498.5 623.8L1499.5 623.5L1500.5 623.5L1501.5 625.5L1502.5 625.0L1503.5 623.8L1504.5 623.5L1505.5 623.8L1506.5 623.5L1507.5 623.0L1508.5 623.5L1509.5 623.8L1510.5 624.5L1511.5 624.5L1512.5 623.0L1513.5 625.5L1514.5 625.5L1515.5 623.0L1516.5 623.0L1517.5 623.5L1518.5 623.5L1519.5 623.5L1520.5 623.8L1521.5 623.0L1522.5 623.5L1523.5 623.5L1524.5 623.5L1525.5 623.8L1526.5 623.5L1527.5 623.5L1528.5 623.5L1529.5 623.5L1530.5 623.0L1531.5 623.8L1532.5 625.5L1533.5 625.0L1534.5 623.0L1535.5 625.0L1536.5 625.5L1537.5 623.8L1538.5 623.0L1539.5 623.5L1540.5 623.5L1541.5 623.5L1542.5 623.5L1543.5 623.5L1544.5 623.0L1545.5 624.5L1546.5 625.0L1547.5 623.0L1548.5 623.5L1549.5 623.0L1550.5 623.8L1551.5 623.0L1552.5 623.8L1553.5 623.5L1554.5 623.8L1555.5 625.5L1556.5 625.0L1557.5 623.8L1558.5 623.5L1559.5 623.5L1560.5 623.5L1561.5 623.5L1562.5 623.8L1563.5 623.5L1564.5 623.5L1565.5 625.5L1566.5 625.5L1567.5 623.8L1568.5 623.5L1569.5 623.5L1570.5 623.8L1571.5 623.5L1572.5 623.5L1573.5 623.5L1574.5 624.5L1575.5 625.0L1576.5 623.0L1577.5 623.5L1578.5 623.5L1579.5 623.5L1580.5 623.0L1581.5 623.5L1582.5 623.5L1583.5 623.5L1584.5 625.0L1585.5 625.0L1586.5 623.5L1587.5 623.5L1588.5 623.8L1589.5 623.8L1590.5 623.5L1591.5 625.0L1592.5 625.5L1593.5 623.8L1594.5 623.5L1595.5 623.8L1596.5 623.5L1597.5 623.8L1598.5 623.5L1599.5 624.5L1600.5 625.0L1601.5 623.5L1602.5 623.5L1603.5 623.5L1604.5 623.8L1605.5 623.8L1606.5 623.5L1607.5 623.5L1608.5 623.0L1609.5 623.5L1610.5 625.5L1611.5 625.0L1612.5 623.5L1613.5 623.5L1614.5 623.5L1615.5 623.5L1616.5 623.5L1617.5 623.5L1618.5 623.0L1619.5 623.0L1620.5 623.0L1621.5 625.5L1622.5 625.0L1623.5 623.8L1624.5 623.8L1625.5 623.5L1626.5 623.8L1627.5 623.8L1628.5 623.5L1629.5 625.0L1630.5 625.5L1631.5 623.5L1632.5 623.5L1633.5 623.0L1634.5 623.5L1635.5 623.8L1636.5 623.5L1637.5 623.8L1638.5 623.5L1639.5 624.5L1640.5 625.0L1641.5 623.8L1642.5 623.5L1643.5 623.5L1644.5 623.0L1645.5 623.8L1646.5 623.8L1647.5 625.5L1648.5 624.5L1649.5 623.5L1650.5 623.5L1651.5 623.0L1652.5 623.5L1653.5 623.5L1654.5 623.8L1655.5 623.5L1656.5 623.0L1657.5 623.5L1658.5 625.5L1659.5 624.5L1660.5 623.5L1661.5 623.5L1662.5 623.5L1663.5 623.0L1664.5 623.5L1665.5 623.8L1666.5 623.8L1667.5 625.0L1668.5 624.5L1669.5 623.5L1670.5 623.5L1671.5 623.5L1672.5 623.5L1673.5 623.8L1674.5 623.5L1675.5 623.5L1676.5 623.0L1677.5 623.5L1678.5 624.5L1679.5 625.5L1680.5 623.5L1681.5 623.5L1682.5 623.8L1683.5 623.5L1684.5 623.5L1685.5 623.5L1686.5 623.5L1687.5 624.5L1688.5 625.5L1689.5 623.0L1690.5 623.5L1691.5 623.5L1692.5 623.8L1693.5 623.5L1694.5 623.5L1695.5 623.5L1696.5 623.0L1697.5 623.5L1698.5 624.5L1699.5 625.0L1700.5 623.5L1701.5 623.8L1702.5 623.0L1703.5 623.5L1704.5 623.5L1705.5 623.5L1706.5 624.5L1707.5 625.5L1708.5 623.5L1709.5 623.5L1710.5 623.8L1711.5 623.5L1712.5 623.5L1713.5 623.5L1714.5 623.5L1715.5 623.8L1716.5 623.5L1717.5 625.5L1718.5 624.5L1719.5 623.0L1720.5 623.5L1721.5 623.8L1722.5 623.5L1723.5 623.0L1724.5 623.5L1725.5 623.0L1726.5 625.0L1727.5 625.0L1728.5 623.8L1729.5 623.0L1730.5 623.5L1731.5 623.0" fill="none" stroke="#11609f" stroke-width="1.2"/>
<rect x="1496" y="624.8" width="1.2" height="1.2" fill="#e4002b"/>
<rect x="1511" y="624.8" width="1.2" height="1.2" fill="#e4002b"/>
<rect x="1533" y="624.8" width="1.2" height="1.2" fill="#e4002b"/>
<rect x="1546" y="624.8" width="1.2" height="1.2" fill="#e4002b"/>
<rect x="1566" y="624.8" width="1.2" height="1.2" fill="#e4002b"/>
<rect x="1585" y="624.8" width="1.2" height="1.2" fill="#e4002b"/>
<rect x="1600" y="624.8" width="1.2" height="1.2" fill="#e4002b"/>
<rect x="1622" y="624.8" width="1.2" height="1.2" fill="#e4002b"/>
<rect x="1640" y="624.8" width="1.2" height="1.2" fill="#e4002b"/>
<rect x="1659" y="624.8" width="1.2" height="1.2" fill="#e4002b"/>
<rect x="1679" y="624.8" width="1.2" height="1.2" fill="#e4002b"/>
<rect x="1699" y="624.8" width="1.2" height="1.2" fill="#e4002b"/>
<rect x="1718" y="624.8" width="1.2" height="1.2" fill="#e4002b"/>
<rect x="1518" y="623" width="5.2" height="21.8" fill="#11609f"/>
<rect x="1518.6" y="645" width="1" height="1" fill="#e4002b"/><rect x="1520.8" y="645" width="1" height="1" fill="#e4002b"/>
<rect x="1516.5" y="597.5" width="7" height="92" fill="none" stroke="#808080" stroke-width="1"/>
<path d="M1514.5 641.5V646.5M1514.5 644H1527.5M1527.5 641.5V646.5" stroke="#808080" stroke-width="0.8" fill="none"/>
<path d="M1518.5 636.5L1521.5 639.5L1518.5 642.5L1515.5 639.5Z" fill="#fff200" stroke="#3a57c8" stroke-width="0.5"/>
<circle cx="1476" cy="607.5" r="12.8" fill="#fff" stroke="#9cc3ec" stroke-width="1.1"/><rect x="1471" y="606.6" width="10" height="1.8" fill="#124a7c"/><rect x="1475.1" y="602.5" width="1.8" height="10" fill="#124a7c"/>
<rect x="1474" y="627" width="4" height="32" fill="#d6d9e1"/>
<circle cx="1476" cy="656.8" r="7" fill="#93bfe8"/>
<circle cx="1476" cy="679.7" r="12.8" fill="#fff" stroke="#9cc3ec" stroke-width="1.1"/><rect x="1471" y="678.8000000000001" width="10" height="1.8" fill="#124a7c"/>
<circle cx="1510" cy="708.5" r="12.8" fill="#fff" stroke="#9cc3ec" stroke-width="1.1"/><rect x="1505" y="707.6" width="10" height="1.8" fill="#124a7c"/>
<rect x="1529" y="706.6" width="174" height="3.8" fill="#d6d9e1"/>
<circle cx="1582.7" cy="708.5" r="7" fill="#93bfe8"/>
<circle cx="1721.7" cy="708.5" r="12.8" fill="#fff" stroke="#9cc3ec" stroke-width="1.1"/><rect x="1716.7" y="707.6" width="10" height="1.8" fill="#124a7c"/><rect x="1720.8" y="703.5" width="1.8" height="10" fill="#124a7c"/>
<text x="1467" y="727.8" font-size="9.5" fill="#333">x1</text>
<text x="1467" y="743.6" font-size="9.5" fill="#333">x32</text>
<rect x="1518.8" y="722.6" width="82.6" height="20.5" rx="3" fill="#fff" stroke="#5f9bd5" stroke-width="0.9"/>
<path d="M1561 722.2H1598.6Q1601.8 722.2 1601.8 725.4V740.4Q1601.8 743.6 1598.6 743.6H1561Z" fill="#0f5796"/>
<circle cx="1536.6" cy="729.4" r="4.3" fill="none" stroke="#124a7c" stroke-width="1.8"/><path d="M1540.1 732.9L1547.2 738.9" stroke="#124a7c" stroke-width="2.3" stroke-linecap="round"/><path d="M1534.2 729.4H1539M1536.6 727V731.8" stroke="#124a7c" stroke-width="1"/>
<g fill="#fff"><rect x="1578.7" y="726" width="2.1" height="9" rx="1.05"/><rect x="1581.3" y="724.3" width="2.1" height="10" rx="1.05"/><rect x="1583.9" y="725" width="2.1" height="10" rx="1.05"/><rect x="1586.5" y="727" width="2.1" height="9" rx="1.05"/><path d="M1578.7 732.5H1588.6V735.5Q1588.6 739 1586.8 740.4H1580Q1578.7 738.5 1578.7 736.5Z"/></g><path d="M1575.2 733.2L1580 738.3" stroke="#fff" stroke-width="2.3" stroke-linecap="round"/>
<path d="M1649.2 736.2C1646.5 729.3 1639.5 726.6 1631.5 732.6" fill="none" stroke="#0f5796" stroke-width="3" stroke-linecap="round"/><path d="M1625.5 727.6V738H1636Z" fill="#0f5796"/>
<text x="1655.6" y="740.4" font-size="20.5" font-weight="bold" fill="#0f5796">1:1</text>
<circle cx="1704.9" cy="733" r="8" fill="#fff" stroke="#2f78bf" stroke-width="1"/><text x="1704.9" y="737.3" font-size="11.5" font-weight="bold" text-anchor="middle" fill="#124a7c">i</text>
</svg>
</body></html>
